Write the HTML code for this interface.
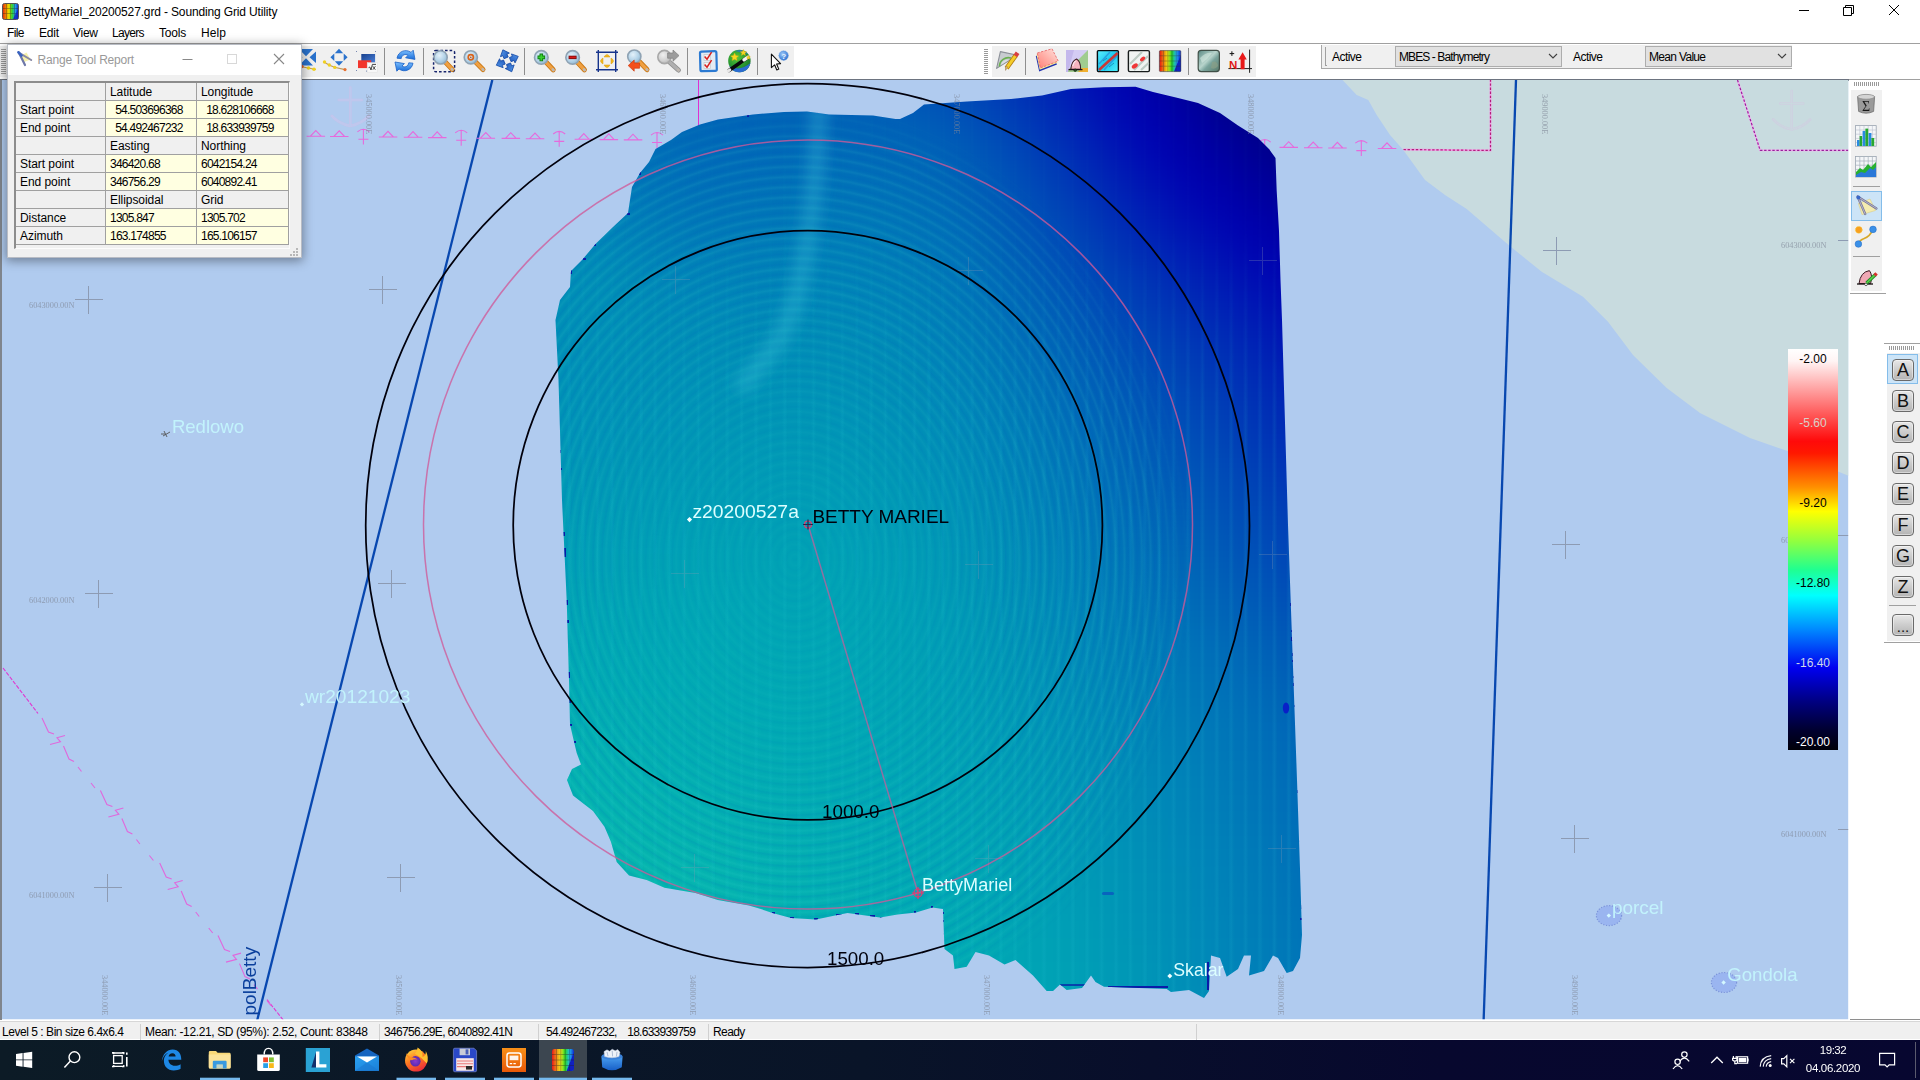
<!DOCTYPE html>
<html><head><meta charset="utf-8"><title>Sounding Grid Utility</title>
<style>
*{box-sizing:border-box;margin:0;padding:0}
html,body{width:1920px;height:1080px;overflow:hidden;background:#fff;font-family:"Liberation Sans",sans-serif;font-size:12px;color:#000}
.abs{position:absolute}
#titlebar{position:absolute;left:0;top:0;width:1920px;height:23px;background:#fff}
#title{position:absolute;left:23.5px;top:5px;font-size:12px;white-space:nowrap;letter-spacing:-0.145px}
#menubar{position:absolute;left:0;top:23px;width:1920px;height:20px;background:#fff}
#menubar span{position:absolute;top:3px;font-size:12px}
#toolbar{position:absolute;left:0;top:43px;width:1920px;height:37px;background:#fff;border-top:1px solid #a0a0a0}
.tbpanel{position:absolute;background:#f0f0f0}
.sep{position:absolute;width:1px;background:#a0a0a0}
#rightpane{position:absolute;left:1849px;top:80px;width:71px;height:941px;background:#fff}
#statusbar{position:absolute;left:0;top:1021px;width:1920px;height:19px;background:#f0f0f0;border-top:1px solid #d7d7d7;border-bottom:1px solid #fff;font-size:12px}
#statusbar span{position:absolute;top:3px;white-space:nowrap}
#statusbar i{position:absolute;top:2px;width:1px;height:16px;background:#d0d0d0}
#taskbar{position:absolute;left:0;top:1040px;width:1920px;height:40px;background:linear-gradient(90deg,#0c1b26 0%,#091428 45%,#07082e 75%,#070730 100%)}
#rtwin{position:absolute;left:7px;top:44px;width:295px;height:214px;background:#f0f0f0;border:1px solid #b8bcc4;box-shadow:0 2px 10px 1px rgba(0,0,0,.38)}
#rttitle{position:absolute;left:0;top:0;width:293px;height:30px;background:#fff}
#rttitle span{position:absolute;left:29.5px;top:8px;color:#999;font-size:12px;letter-spacing:-.2px}
#rtgrid{position:absolute;left:6px;top:36px;width:276px;height:168px;background:#f0f0f0;border-left:2px solid #8c8c8c;border-top:2px solid #8c8c8c;border-right:1px solid #fafafa;border-bottom:1px solid #fcfcfc}
.c{position:absolute;height:18px;border-right:1px solid #a0a0a0;border-bottom:1px solid #a0a0a0;font-size:12px;line-height:18px;padding-left:4px;white-space:nowrap;letter-spacing:-.15px}
.h{background:#f0f0f0;letter-spacing:-.06px}.v{background:#ffffe1;letter-spacing:-.77px}
.lb{position:absolute;left:1888px;width:30px;height:30px}
.key{position:absolute;left:1892px;width:22px;height:22px;border-radius:4px;border:1px solid #6a6a6a;background:linear-gradient(180deg,#e8e8e8 0%,#cfcfcf 45%,#b4b4b4 100%);box-shadow:inset 0 0 0 1px rgba(255,255,255,.45);font-size:18px;line-height:20px;text-align:center;color:#111}

</style></head>
<body>
<div id="titlebar">
<svg class="abs" style="left:2px;top:3px" width="17" height="17" viewBox="0 0 17 17">
<defs><linearGradient id="ticon" x1="0" x2="1"><stop offset="0" stop-color="#e02010"/><stop offset=".2" stop-color="#f08000"/><stop offset=".4" stop-color="#e8e000"/><stop offset=".6" stop-color="#30d030"/><stop offset=".8" stop-color="#20a0f0"/><stop offset="1" stop-color="#1020c0"/></linearGradient></defs>
<rect x=".5" y=".5" width="16" height="16" rx="2" fill="url(#ticon)" stroke="#555"/>
<path d="M4.5,1 v15 M8.5,1 v15 M12.5,1 v15 M1,5.5 h15 M1,10.5 h15" stroke="#222" stroke-width=".6" opacity=".55"/>
<path d="M11,16 L16,6 V16Z" fill="#1020c0" opacity=".8"/>
</svg>
<div id="title">BettyMariel_20200527.grd - Sounding Grid Utility</div>
<svg class="abs" style="left:1790px;top:0" width="130" height="23" viewBox="0 0 130 23" fill="none" stroke="#000" stroke-width="1">
<path d="M9,10.5 h10"/>
<path d="M53.5,7.5 h8 v8 h-8z M55.5,7.5 v-2 h8 v8 h-2"/>
<path d="M99,5 l10,10 M109,5 l-10,10"/>
</svg>
</div>
<div id="menubar">
<span style="left:7px;letter-spacing:-.6px">File</span><span style="left:39px;letter-spacing:-.23px">Edit</span><span style="left:73px;letter-spacing:-.27px">View</span><span style="left:112px;letter-spacing:-.7px">Layers</span><span style="left:159px;letter-spacing:-.18px">Tools</span><span style="left:201px;letter-spacing:.1px">Help</span>
</div>
<div id="toolbar">
<!-- left toolbar panel -->
<div class="tbpanel" style="left:0;top:2px;width:794px;height:31px"></div>
<div class="abs" style="left:1px;top:5px;width:5px;height:26px;background:repeating-linear-gradient(180deg,#9a9a9a 0 1px,#f0f0f0 1px 2px)"></div>
<!--ICONS1-->
<!-- second toolbar -->
<div class="tbpanel" style="left:992px;top:2px;width:264px;height:31px"></div>
<div class="abs" style="left:984px;top:5px;width:4px;height:26px;background:repeating-linear-gradient(180deg,#9a9a9a 0 1px,#fff 1px 2px)"></div>
<!--ICONS2-->
<!-- combos -->
<div class="tbpanel" style="left:1321px;top:1px;width:471px;height:24px;border-bottom:1px solid #a8a8a8;border-left:1px solid #a8a8a8"></div>
<div class="abs" style="left:1325px;top:3px;width:2px;height:19px;border-left:1px solid #a0a0a0;border-bottom:1px solid #a0a0a0"></div>
<span class="abs" style="left:1332px;top:6px;letter-spacing:-.54px">Active</span>
<div class="abs" style="left:1395px;top:2px;width:167px;height:21px;background:#e1e1e1;border:1px solid #adadad"></div>
<span class="abs" style="left:1399px;top:6px;letter-spacing:-.9px">MBES - Bathymetry</span>
<svg class="abs" style="left:1548px;top:9px" width="10" height="7"><path d="M1,1 l4,4 l4,-4" fill="none" stroke="#404040" stroke-width="1.1"/></svg>
<span class="abs" style="left:1573px;top:6px;letter-spacing:-.54px">Active</span>
<div class="abs" style="left:1645px;top:2px;width:147px;height:21px;background:#e1e1e1;border:1px solid #adadad"></div>
<span class="abs" style="left:1649px;top:6px;letter-spacing:-.68px">Mean Value</span>
<svg class="abs" style="left:1777px;top:9px" width="10" height="7"><path d="M1,1 l4,4 l4,-4" fill="none" stroke="#404040" stroke-width="1.1"/></svg>
</div>
<div class="abs" style="left:0;top:79px;width:1849px;height:2px;background:#6d7480"></div>
<div class="abs" style="left:1849px;top:79px;width:71px;height:1px;background:#a0a0a0"></div>

<svg class="abs" style="left:0;top:0" width="1920" height="300" viewBox="0 0 1920 300"><defs>
<radialGradient id="lensb" cx=".4" cy=".35" r=".7"><stop offset="0" stop-color="#e4f1fa"/><stop offset=".6" stop-color="#b4d3e8"/><stop offset="1" stop-color="#8db4d0"/></radialGradient>
<radialGradient id="lensg" cx=".4" cy=".35" r=".7"><stop offset="0" stop-color="#efefef"/><stop offset=".6" stop-color="#d2d2d2"/><stop offset="1" stop-color="#b4b4b4"/></radialGradient>
<linearGradient id="blu" x1="0" y1="0" x2="0" y2="1"><stop offset="0" stop-color="#7cc0ff"/><stop offset="1" stop-color="#1a6cd8"/></linearGradient>
<linearGradient id="blu2" x1="0" y1="0" x2="1" y2="1"><stop offset="0" stop-color="#5aa0f0"/><stop offset="1" stop-color="#1c54b8"/></linearGradient>
<linearGradient id="navy" x1="0" y1="0" x2="1" y2="1"><stop offset="0" stop-color="#17408c"/><stop offset="1" stop-color="#4a80d8"/></linearGradient>
<radialGradient id="globe" cx=".4" cy=".35" r=".75"><stop offset="0" stop-color="#58c838"/><stop offset=".55" stop-color="#2a9a30"/><stop offset="1" stop-color="#186a28"/></radialGradient>
<radialGradient id="qb" cx=".4" cy=".35" r=".7"><stop offset="0" stop-color="#9cc8f8"/><stop offset="1" stop-color="#2a70d0"/></radialGradient>
<linearGradient id="pinkg" x1="0" y1="1" x2="1" y2="0"><stop offset="0" stop-color="#ff8078"/><stop offset=".5" stop-color="#ffb0a8"/><stop offset="1" stop-color="#ffe4e0"/></linearGradient>
<linearGradient id="cyg" x1="0" y1="0" x2="1" y2="1"><stop offset="0" stop-color="#60f0ff"/><stop offset=".5" stop-color="#18c8f0"/><stop offset="1" stop-color="#50f0f8"/></linearGradient>
<linearGradient id="rainb" x1="0" x2="1"><stop offset="0" stop-color="#e81010"/><stop offset=".2" stop-color="#f08010"/><stop offset=".38" stop-color="#e8e810"/><stop offset=".58" stop-color="#20d828"/><stop offset=".78" stop-color="#20b0f0"/><stop offset="1" stop-color="#1028d0"/></linearGradient>
<linearGradient id="sat" x1="0" y1="0" x2="1" y2="1"><stop offset="0" stop-color="#5a8a84"/><stop offset=".45" stop-color="#b8d4cc"/><stop offset=".6" stop-color="#7aa49c"/><stop offset="1" stop-color="#587868"/></linearGradient>
<linearGradient id="keyg" x1="0" y1="0" x2="0" y2="1"><stop offset="0" stop-color="#d8d8d8"/><stop offset="1" stop-color="#8c8c8c"/></linearGradient>
</defs><g fill="#2a72cc"><path d="M299,49 h14 l-7,7.2z M299,65.5 h14 l-7,-7.2z M316,51.5 v11.5 l-6.5,-5.8z M296,51.5 v11.5 l6.5,-5.8z"/></g><path d="M298,66 L308,68 L316,69.5" stroke="#c8a040" stroke-width="1.2" fill="none"/><circle cx="302" cy="66.5" r="1.7" fill="#e06030"/><circle cx="308.5" cy="68" r="1.8" fill="#f0d020"/><circle cx="314" cy="69.3" r="1.8" fill="#f0d020"/><g fill="#2a72cc"><path d="M334.8,53.3 h8.4 l-4.2,-4.5z M334.8,61.2 h8.4 l-4.2,4.5z M334.3,53.6 v7.4 l-3.9,-3.7z M343.7,53.6 v7.4 l3.9,-3.7z"/></g><path d="M324,62 L329,65 L334.5,67.3 L345,69.6" stroke="#c09a58" stroke-width="1.1" fill="none"/><circle cx="324.5" cy="62" r="1.7" fill="#f0d020"/><circle cx="329.3" cy="65" r="1.7" fill="#f0d020"/><circle cx="334.8" cy="67.4" r="1.7" fill="#f0d020"/><circle cx="345" cy="69.6" r="1.6" fill="#e87030"/><rect x="361.3" y="54" width="13.8" height="9" fill="url(#navy)"/><rect x="358" y="60.3" width="13.2" height="7.8" fill="#f2352c"/><rect x="367.2" y="62.6" width="10" height="9.6" fill="#f8f8f8" stroke="#e0e0e0" stroke-width=".5"/><path d="M368.6,67.6 l1.2,-.6 l1.2,3 l1.4,-5.6 h3.6" stroke="#303030" stroke-width=".9" fill="none"/><path d="M372.8,66.2 l2.6,3.6 M375.4,66.2 l-2.6,3.6" stroke="#303030" stroke-width=".8"/><g fill="#7888b0"><rect x="356" y="51" width="1" height="1"/><rect x="375" y="51" width="1" height="1"/><rect x="356" y="70" width="1" height="1"/><rect x="366" y="70.6" width="1" height="1"/></g><g fill="url(#blu)" stroke="#1a62c8" stroke-width=".8" stroke-linejoin="round"><path d="M397,58.2 C398,51.6 405.5,48.4 411,52.4 L413.2,50.2 L415,59.4 L405.6,57.8 L408,55.4 C405.4,53.4 401.8,54.8 401.2,58.6Z"/><path d="M413,63.2 C412,69.8 404.5,73 399,69 L396.8,71.2 L395,62 L404.4,63.6 L402,66 C404.6,68 408.2,66.6 408.8,62.8Z"/></g><rect x="433.6" y="50.4" width="21" height="21.4" rx="2.2" fill="none" stroke="#16246c" stroke-width="1.5" stroke-dasharray="2.6 2"/><line x1="445.35200000000003" y1="62.152" x2="452.2" y2="69.4" stroke="#c87818" stroke-width="5" stroke-linecap="round"/><line x1="445.35200000000003" y1="62.152" x2="452.2" y2="69.4" stroke="#f0a040" stroke-width="3.2" stroke-linecap="round"/><line x1="451.9" y1="69.10000000000001" x2="452.5" y2="69.7" stroke="#c0b8b0" stroke-width="2.6" stroke-linecap="round"/><circle cx="440.6" cy="57.4" r="6.6" fill="url(#lensb)" stroke="#8fa3b4" stroke-width="1.6"/><line x1="475.552" y1="62.052" x2="483" y2="69.5" stroke="#c87818" stroke-width="5" stroke-linecap="round"/><line x1="475.552" y1="62.052" x2="483" y2="69.5" stroke="#f0a040" stroke-width="3.2" stroke-linecap="round"/><line x1="482.7" y1="69.2" x2="483.3" y2="69.8" stroke="#c0b8b0" stroke-width="2.6" stroke-linecap="round"/><circle cx="470.8" cy="57.3" r="6.6" fill="url(#lensb)" stroke="#8fa3b4" stroke-width="1.6"/><circle cx="470.8" cy="57.3" r="2.6" fill="none" stroke="#d8641c" stroke-width="1.7"/><circle cx="470.8" cy="57.3" r=".8" fill="#b04810"/><g transform="translate(507.3,60.8) rotate(-22)" fill="url(#blu2)" stroke="#1a4ea8" stroke-width=".8" stroke-linejoin="round"><path d="M-2.2,-3.2 V-6.4 H-4.8 L0,-11.8 L4.8,-6.4 H2.2 V-3.200Z" transform="rotate(0)"/><path d="M-2.2,-3.2 V-6.4 H-4.8 L0,-11.8 L4.8,-6.4 H2.2 V-3.200Z" transform="rotate(90)"/><path d="M-2.2,-3.2 V-6.4 H-4.8 L0,-11.8 L4.8,-6.4 H2.2 V-3.200Z" transform="rotate(180)"/><path d="M-2.2,-3.2 V-6.4 H-4.8 L0,-11.8 L4.8,-6.4 H2.2 V-3.200Z" transform="rotate(270)"/></g><line x1="546.1959999999999" y1="62.296" x2="553.2" y2="69.8" stroke="#c87818" stroke-width="5" stroke-linecap="round"/><line x1="546.1959999999999" y1="62.296" x2="553.2" y2="69.8" stroke="#f0a040" stroke-width="3.2" stroke-linecap="round"/><line x1="552.9000000000001" y1="69.5" x2="553.5" y2="70.1" stroke="#c0b8b0" stroke-width="2.6" stroke-linecap="round"/><circle cx="541.3" cy="57.4" r="6.8" fill="url(#lensb)" stroke="#8fa3b4" stroke-width="1.6"/><path d="M541.3,53.6 v7.6 M537.5,57.4 h7.6" stroke="#0c7c10" stroke-width="3.6"/><path d="M541.3,54.4 v6 M538.3,57.4 h6" stroke="#38d030" stroke-width="1.8"/><line x1="577.496" y1="62.296" x2="584.4" y2="69.8" stroke="#c87818" stroke-width="5" stroke-linecap="round"/><line x1="577.496" y1="62.296" x2="584.4" y2="69.8" stroke="#f0a040" stroke-width="3.2" stroke-linecap="round"/><line x1="584.1" y1="69.5" x2="584.6999999999999" y2="70.1" stroke="#c0b8b0" stroke-width="2.6" stroke-linecap="round"/><circle cx="572.6" cy="57.4" r="6.8" fill="url(#lensb)" stroke="#8fa3b4" stroke-width="1.6"/><path d="M568.6,57.4 h8" stroke="#7c0c0c" stroke-width="3.4"/><path d="M569.4,57.4 h6.4" stroke="#d81818" stroke-width="1.7"/><path d="M598.3,50 v22 M615.7,50 v22 M596,52.3 h22 M596,69.7 h22" stroke="#17348c" stroke-width="1.4" fill="none"/><g fill="#f2b81c" stroke="#d89a10" stroke-width=".5"><path d="M604,57 h6 q-3,-5 -6,0z M604,65 h6 q-3,5 -6,0z M603,58 v6 q-5,-3 0,-6z M611,58 v6 q5,-3 0,-6z"/></g><line x1="639.0519999999999" y1="61.352000000000004" x2="647" y2="69.6" stroke="#c87818" stroke-width="5" stroke-linecap="round"/><line x1="639.0519999999999" y1="61.352000000000004" x2="647" y2="69.6" stroke="#f0a040" stroke-width="3.2" stroke-linecap="round"/><line x1="646.7" y1="69.3" x2="647.3" y2="69.89999999999999" stroke="#c0b8b0" stroke-width="2.6" stroke-linecap="round"/><circle cx="634.3" cy="56.6" r="6.6" fill="url(#lensb)" stroke="#8fa3b4" stroke-width="1.6"/><path d="M628.2,65.6 L634.2,60 V63 H639.6 V68.2 H634.2 V71.2Z" fill="#f4501c" stroke="#d03c10" stroke-width=".7" stroke-linejoin="round"/><line x1="669.1519999999999" y1="61.752" x2="678.4" y2="70" stroke="#8e8e8e" stroke-width="5" stroke-linecap="round"/><line x1="669.1519999999999" y1="61.752" x2="678.4" y2="70" stroke="#b0b0b0" stroke-width="3.2" stroke-linecap="round"/><line x1="678.1" y1="69.7" x2="678.6999999999999" y2="70.3" stroke="#c0b8b0" stroke-width="2.6" stroke-linecap="round"/><circle cx="664.4" cy="57" r="6.6" fill="url(#lensg)" stroke="#a8a8a8" stroke-width="1.6"/><path d="M679,55.6 L673,50 V53 H667.6 V58.2 H673 V61.2Z" fill="#9c9c9c" stroke="#808080" stroke-width=".7" stroke-linejoin="round"/><rect x="700.2" y="51.4" width="16.4" height="19.6" rx="1.6" fill="#e4ebf3" stroke="#2c7ad2" stroke-width="2.2" transform="rotate(-1.5 708 61)"/><rect x="704" y="54.6" width="6.6" height="6" fill="#f4f4f4" stroke="#c4c8cc" stroke-width=".7"/><rect x="704" y="62.6" width="6.6" height="6" fill="#f4f4f4" stroke="#c4c8cc" stroke-width=".7"/><path d="M704.6,56.6 l2.4,2.6 l4.6,-7" stroke="#d82020" stroke-width="1.5" fill="none"/><path d="M704.6,64.6 l2.4,2.6 l4.6,-7" stroke="#d82020" stroke-width="1.5" fill="none"/><circle cx="739.4" cy="61" r="11.2" fill="url(#globe)"/><path d="M729,66 Q740,72 750.4,63 A11.2,11.2 0 0 1 730.6,68Z" fill="#2a6cd0"/><path d="M735,51 q8,-3 13,3 q-6,-1 -13,-3z" fill="#2a78c8" opacity=".8"/><path d="M729,70.4 L747.6,57.4" stroke="#0a0a0a" stroke-width="3.6" stroke-linecap="round"/><path d="M744,59.9 L748,57.1" stroke="#f4f4f4" stroke-width="3.4" stroke-linecap="round"/><path d="M728.2,71 l1.6,-1.1" stroke="#e8e8e8" stroke-width="3" stroke-linecap="round"/><g fill="#f8d820" stroke="#d8a810" stroke-width=".4"><path d="M734.6,53 l1.2,2.6 l2.8,.3 l-2.1,1.9 l.6,2.8 l-2.5,-1.4 l-2.5,1.4 l.6,-2.8 l-2.1,-1.9 l2.8,-.3z"/><path d="M743.4,49.6 l.9,2 l2.2,.2 l-1.6,1.5 l.5,2.1 l-2,-1.1 l-2,1.1 l.5,-2.1 l-1.6,-1.5 l2.2,-.2z"/><path d="M748.4,55.4 l.6,1.3 l1.4,.1 l-1,1 l.3,1.4 l-1.3,-.7 l-1.3,.7 l.3,-1.4 l-1,-1 l1.4,-.1z"/></g><circle cx="783.6" cy="55.6" r="4.8" fill="url(#qb)" stroke="#6aa0e0" stroke-width=".6" stroke-dasharray="1 .8"/><text x="783.6" y="58.6" font-size="8" font-weight="bold" text-anchor="middle" fill="#e8f2ff" font-family="Liberation Sans,sans-serif">?</text><path d="M771.4,54.2 V67.6 L774.6,64.8 L776.8,70 L778.8,69.1 L776.6,64 L780.6,63.6Z" fill="#fff" stroke="#101010" stroke-width="1.1" stroke-linejoin="round"/><path d="M384.5,48 v27" stroke="#8e8e8e" stroke-width="1"/><path d="M423.5,48 v27" stroke="#8e8e8e" stroke-width="1"/><path d="M524.5,48 v27" stroke="#8e8e8e" stroke-width="1"/><path d="M687.5,48 v27" stroke="#8e8e8e" stroke-width="1"/><path d="M757.5,48 v27" stroke="#8e8e8e" stroke-width="1"/><path d="M996.6,68.4 L1000.4,51.6 L1017.6,55.2 Z" fill="#c8ccd0" stroke="#8c9098" stroke-width="1.1" stroke-linejoin="round"/><path d="M999.4,66.4 A9,9 0 0 1 1011,58" fill="none" stroke="#6ab050" stroke-width="1.6"/><path d="M1001,65 A6.4,6.4 0 0 1 1009,60" fill="#e8ecec" stroke="none" opacity=".6"/><path d="M1015.8,55.4 L1006.6,68.2" stroke="#b07810" stroke-width="4.6" stroke-linecap="butt"/><path d="M1015.8,55.4 L1006.6,68.2" stroke="#f4cc28" stroke-width="3" stroke-linecap="butt"/><path d="M1017.6,52.8 L1015.4,56" stroke="#d84040" stroke-width="4.4"/><path d="M1007.6,66.8 l-2,3.6 l-.2,-3.8z" fill="#e8c898" stroke="#8a6a40" stroke-width=".5"/><path d="M1025.5,48 v27" stroke="#8e8e8e"/><path d="M1035.800,56 L1050.600,51.800 L1057,64.400 L1039.200,71.400Z" fill="#2030b0"/><path d="M1036.500,54.600 L1051.300,50.400 L1057.600,62.800 L1039.700,69.800Z" fill="#f8ec98"/><path d="M1037.300,53 L1052,48.800 L1058.200,61.100 L1040.300,68Z" fill="url(#pinkg)" stroke="#e86c6c" stroke-width=".9" stroke-dasharray="2.400 1.400" stroke-linejoin="round"/><rect x="1066" y="50" width="22" height="22" fill="#d4ccf4"/><path d="M1088,50 V72 H1066 Z" fill="#a0cc90"/><path d="M1066,50 h8 L1068,72 h-2z" fill="#c4b8ec"/><path d="M1082,68 h6 v4 h-10z" fill="#f0b030"/><path d="M1070.800,69.200 Q1071.600,61 1076.600,59 Q1080.800,61.400 1080.600,69.200 Z" fill="#f8b4c0" stroke="#402028" stroke-width="1.100"/><path d="M1072.800,66 q.8,-4 3,-5" stroke="#fff" stroke-width="1.200" opacity=".7" fill="none"/><path d="M1068.500,69.600 h14" stroke="#201018" stroke-width="1.300"/><circle cx="1075.200" cy="70.200" r="1.300" fill="#206020" stroke="#201018" stroke-width=".6"/><rect x="1097.4" y="50.6" width="21" height="21" rx="1" fill="url(#cyg)" stroke="#080c10" stroke-width="1.4"/><g stroke="#2890d8" stroke-width="1.6" opacity=".75"><path d="M1099,64 L1110,52 M1104,70 L1117,56"/></g><path d="M1099,70 L1117.6,53" stroke="#c83838" stroke-width="2.6"/><path d="M1103,61 l4,-3 M1109,67 l5,-4" stroke="#1078a8" stroke-width="1" opacity=".7"/><rect x="1128.4" y="50.6" width="21" height="21" rx="1.4" fill="#f0f4f2" stroke="#181c1c" stroke-width="1.4"/><g stroke="#b8c8c0" stroke-width="2.2" opacity=".9"><path d="M1130,64 L1142,52 M1134,70 L1148,56 M1141,70 L1148.6,63"/></g><ellipse cx="1142.6" cy="59" rx="3" ry="1.8" fill="#f03838" transform="rotate(-35 1142.6 59)"/><ellipse cx="1134.8" cy="66" rx="3.4" ry="2" fill="#f03838" transform="rotate(-35 1134.8 66)"/><rect x="1159.4" y="50.6" width="21.4" height="21" rx="1" fill="url(#rainb)"/><path d="M1174,71.6 L1180.8,55 V71.6Z" fill="#1020c0"/><path d="M1163.6,50.6 v21 M1167.8,50.6 v21 M1172,50.6 v21 M1176.2,50.6 v21 M1159.4,55.8 h21.4 M1159.4,61 h21.4 M1159.4,66.2 h21.4" stroke="#303030" stroke-width=".7" opacity=".5"/><rect x="1159.4" y="50.6" width="21.4" height="21" rx="1" fill="none" stroke="#303840" stroke-width=".8" opacity=".7"/><path d="M1188.5,48 v27" stroke="#8e8e8e"/><rect x="1198.2" y="50.4" width="21.2" height="21.2" rx="3" fill="url(#sat)" stroke="#405048" stroke-width="1.2"/><path d="M1200,58 q6,-6 12,-5 q-4,6 -10,10z" fill="#d8ece4" opacity=".55"/><path d="M1212,62 q5,-2 6,4 q-3,4 -7,2z" fill="#8aa088" opacity=".7"/><path d="M1249.6,49.6 V72.8 M1228.4,68.6 H1252" stroke="#202020" stroke-width="1"/><path d="M1229.6,53.6 h4.6 M1231.9,51.3 v4.6" stroke="#101010" stroke-width="1"/><path d="M1242.6,52.2 L1246.8,59.6 H1244.6 V69.2 H1240.6 V59.6 H1238.4Z" fill="#e81818"/><text x="1229" y="69.4" font-size="11.5" font-weight="bold" fill="#e01818" font-family="Liberation Sans,sans-serif">N</text></svg>
<svg id="map" width="1920" height="1080" viewBox="0 0 1920 1080" style="position:absolute;left:0;top:0">
<defs>
<clipPath id="mapclip"><rect x="0" y="80" width="1848.2" height="939.2"/></clipPath>
<clipPath id="blobclip"><path d="M569,680 L566.7,600 L562,500 L558.5,380 L555.5,320 L560,300 L570,287 L571,271 L582,260 L595.5,244 L613,227 L628,213 L630,200 L632,187 L640,173 L649,162 L655.5,149 L671,140 L682,132 L700,124.5 L718,119.5 L753,114.5 L784,112 L807,111.5 L829,114.5 L873,115.5 L895.5,119 L900,119 L913,113 L924,104.5 L967,101.5 L1011,99 L1042,95.5 L1071,89 L1104,87.3 L1135.5,86.7 L1153,92 L1178,98 L1198,103 L1220,113 L1238,125.5 L1258,138 L1269,149 L1275.5,158 L1276.7,191 L1279,231 L1280.5,280 L1282,320 L1288,525 L1297,780 L1300,869 L1302,935 L1300,958 L1293,971 L1286.7,973 L1278,958 L1273,955.5 L1264,971 L1249,975.5 L1251,955.5 L1244,955.5 L1238,969 L1226.7,976.7 L1220,958 L1211,955.5 L1209,991 L1204,998 L1189,990 L1171,992 L1166.7,989 L1104,986.7 L1095.5,982 L1091,975.5 L1082,988 L1066.7,990 L1060,984.5 L1053,991 L1046.7,991 L1033,975.5 L1015.5,960 L1004.5,964.5 L989,955.5 L975.5,952 L966.7,966.7 L954.5,969 L953,955.5 L944.5,949 L943,909 L932.5,907.5 L916,912.5 L897.5,914.4 L880,917.5 L847.5,913 L835,915.6 L816,919.4 L791,918 L772.5,913 L760,908.75 L749,905.5 L717.8,900 L695.5,893 L664.5,887.8 L646.7,880 L629,875.5 L616.7,862 L611,842 L604.5,826.7 L593,811 L573,795.5 L567,780 L572,769 L581,764.5 L576.7,753 L570,724.4Z"/></clipPath>
<filter id="blur" x="0" y="0" width="100%" height="100%" filterUnits="userSpaceOnUse" color-interpolation-filters="sRGB"><feGaussianBlur stdDeviation="14"/></filter>
<linearGradient id="legend" x1="0" y1="0" x2="0" y2="1">
<stop offset="0" stop-color="#ffffff"/>
<stop offset="0.03" stop-color="#fff4f4"/>
<stop offset="0.23" stop-color="#ff0a0a"/>
<stop offset="0.26" stop-color="#ff1800"/>
<stop offset="0.345" stop-color="#ff9000"/>
<stop offset="0.405" stop-color="#ffff00"/>
<stop offset="0.48" stop-color="#90ff40"/>
<stop offset="0.55" stop-color="#20ff90"/>
<stop offset="0.615" stop-color="#00ffff"/>
<stop offset="0.70" stop-color="#0088ff"/>
<stop offset="0.795" stop-color="#0000f0"/>
<stop offset="0.88" stop-color="#000080"/>
<stop offset="0.95" stop-color="#000030"/>
<stop offset="1" stop-color="#000008"/>
</linearGradient>
<linearGradient id="vstripe" gradientUnits="userSpaceOnUse" x1="0" y1="0" x2="14.4" y2="0" spreadMethod="repeat">
<stop offset="0" stop-color="#30d8e0" stop-opacity="0"/><stop offset=".3" stop-color="#30d8e0" stop-opacity="0"/><stop offset=".5" stop-color="#30d8e0" stop-opacity=".10"/><stop offset=".7" stop-color="#30d8e0" stop-opacity="0"/><stop offset="1" stop-color="#30d8e0" stop-opacity="0"/>
</linearGradient>
<radialGradient id="rings" gradientUnits="userSpaceOnUse" cx="795" cy="560" r="10.2" spreadMethod="repeat" gradientTransform="translate(795 560) scale(.86 1) translate(-795 -560)">
<stop offset="0" stop-color="#0048c0" stop-opacity=".09"/><stop offset=".25" stop-color="#0048c0" stop-opacity="0"/><stop offset=".3" stop-color="#50f0d0" stop-opacity="0"/><stop offset=".55" stop-color="#50f0d0" stop-opacity=".09"/><stop offset=".8" stop-color="#50f0d0" stop-opacity="0"/><stop offset=".85" stop-color="#0048c0" stop-opacity="0"/><stop offset="1" stop-color="#0048c0" stop-opacity=".09"/>
</radialGradient>
<radialGradient id="ringmask" gradientUnits="userSpaceOnUse" cx="790" cy="570" r="470" gradientTransform="translate(790 570) scale(.86 1) translate(-790 -570)">
<stop offset="0" stop-color="#fff" stop-opacity=".25"/><stop offset=".35" stop-color="#fff" stop-opacity=".5"/><stop offset=".6" stop-color="#fff" stop-opacity="1"/><stop offset=".9" stop-color="#fff" stop-opacity="1"/><stop offset="1" stop-color="#fff" stop-opacity="0"/>
</radialGradient>
<mask id="rmask" maskUnits="userSpaceOnUse" x="500" y="60" width="860" height="980"><rect x="500" y="60" width="860" height="980" fill="url(#ringmask)"/></mask>
<filter id="blur6" x="600" y="60" width="500" height="500" filterUnits="userSpaceOnUse"><feGaussianBlur stdDeviation="7"/></filter>
<linearGradient id="vsg" gradientUnits="userSpaceOnUse" x1="0" y1="230" x2="0" y2="420"><stop offset="0" stop-color="#fff" stop-opacity=".15"/><stop offset="1" stop-color="#fff" stop-opacity="1"/></linearGradient>
<mask id="vsmask" maskUnits="userSpaceOnUse" x="500" y="60" width="860" height="980"><rect x="500" y="60" width="860" height="980" fill="url(#vsg)"/></mask>

</defs>
<g clip-path="url(#mapclip)">
<rect x="0" y="80" width="1849" height="941" fill="#b0cbef"/>
<path d="M1342.500,80 L1356.700,95 L1368.300,100 L1376.700,115 L1390,135 L1403.300,150 L1425,180 L1445,195 L1466.7,209 L1508,244.6 L1541.7,271.7 L1583,296.7 L1608,321.7 L1633,355 L1666.7,388 L1700,413 L1750,438 L1787.5,451 L1849,476 L1849,80Z" fill="#c8dbdf"/>
<!-- blue lines -->
<g stroke="#0848b0" stroke-width="2.300" fill="none">
<line x1="492.3" y1="80" x2="257" y2="1021"/>
<line x1="1516" y1="80" x2="1483.6" y2="1021"/>
</g>
<!-- magenta chart features -->
<g stroke="#e060d8" stroke-width="1" fill="none" shape-rendering="crispEdges">
<line x1="698.5" y1="80" x2="698.5" y2="126" stroke="#e030d0" stroke-width="1.4"/>
<path d="M1403.500,149.500 L1490.500,150.500 V80" stroke="#f0a0e4" stroke-width="1.800" shape-rendering="auto"/><path d="M1403.500,149.500 L1490.500,150.500 V80" stroke-dasharray="2.400 1.700" stroke="#b41c7c" stroke-width="1.200" shape-rendering="auto"/>
<path d="M1737.500,80 L1760.200,150.400 H1849" stroke="#f2b0f0" stroke-width="1.800" shape-rendering="auto"/><path d="M1737.500,80 L1760.200,150.400 H1849" stroke-dasharray="2.400 1.700" stroke="#98209a" stroke-width="1.200" shape-rendering="auto"/>
</g>
<g stroke="#e070dc" stroke-width="1" fill="none">
<path d="M363.4,129.2 v15.4 M358.4,139.2 h10 M357.4,131.8 q6,-5.200 12,0 M461.2,130.3 v15.4 M456.2,140.3 h10 M455.2,132.9 q6,-5.200 12,0 M559.2,131.4 v15.4 M554.2,141.4 h10 M553.2,134.0 q6,-5.200 12,0 M657.0,132.5 v15.4 M652.0,142.5 h10 M651.0,135.1 q6,-5.200 12,0 M306.6,136.2 h18.5 M310.4,136.2 l5.4,-5.7 l5.4,5.700 M330.0,136.5 h18.5 M333.8,136.5 l5.4,-5.7 l5.4,5.700 M378.8,137.0 h18.5 M382.6,137.0 l5.4,-5.7 l5.4,5.700 M403.8,137.3 h18.5 M407.6,137.3 l5.4,-5.7 l5.4,5.700 M428.0,137.6 h18.5 M431.8,137.6 l5.4,-5.7 l5.4,5.700 M476.6,138.2 h18.5 M480.4,138.2 l5.4,-5.7 l5.4,5.700 M501.6,138.4 h18.5 M505.4,138.4 l5.4,-5.7 l5.4,5.700 M525.8,138.7 h18.5 M529.6,138.7 l5.4,-5.7 l5.4,5.700 M574.6,139.3 h18.5 M578.4,139.3 l5.4,-5.7 l5.4,5.700 M599.6,139.6 h18.5 M603.4,139.6 l5.4,-5.7 l5.4,5.700 M623.8,139.9 h18.5 M627.6,139.9 l5.4,-5.7 l5.4,5.700 M1264.7,139.5 v15.4 M1259.7,149.5 h10 M1258.7,142.1 q6,-5.200 12,0 M1361.3,140.6 v15.4 M1356.3,150.6 h10 M1355.3,143.2 q6,-5.200 12,0 M1279.5,147.4 h18.5 M1283.3,147.4 l5.4,-5.7 l5.4,5.700 M1304.0,147.7 h18.5 M1307.8,147.7 l5.4,-5.7 l5.4,5.700 M1328.2,148.0 h18.5 M1332.0,148.0 l5.4,-5.7 l5.4,5.700 M1377.8,148.5 h18.5 M1381.6,148.5 l5.4,-5.7 l5.4,5.700" stroke="#e66adc" stroke-width="1.1" fill="none"/>
<!-- cable zig-zag lower-left -->
<path d="M3,668 L38,713.500" stroke-dasharray="4 1.500" stroke="#e038d0" stroke-width="1.100"/>
<path d="M267,999.600 L284,1021" stroke-dasharray="4 1.500" stroke="#e038d0" stroke-width="1.100"/>
<path d="M42.0,718.0 L48.5,732.0 L54.0,734.0 M50.0,744.5 L60.5,741.8 L57.0,737.8 L65.0,735.5 M63.5,746.0 L69.0,759.0 L74.0,761.5 M78.0,767.0 L81.5,771.5 M91.0,783.0 L95.0,788.0 M100.4,790.5 L106.9,804.5 L112.4,806.5 M108.4,817.0 L118.9,814.3 L115.4,810.3 L123.4,808.0 M121.9,818.5 L127.4,831.5 L132.4,834.0 M136.4,839.5 L139.9,844.0 M149.4,855.5 L153.4,860.5 M159.7,863.0 L166.2,877.0 L171.7,879.0 M167.7,889.5 L178.2,886.8 L174.7,882.8 L182.7,880.5 M181.2,891.0 L186.7,904.0 L191.7,906.5 M195.7,912.0 L199.2,916.5 M208.7,928.0 L212.7,933.0 M218.0,935.6 L224.5,949.6 L230.0,951.6 M226.0,962.1 L236.5,959.4 L233.0,955.4 L241.0,953.1 M239.5,963.6 L245.0,976.6 L250.0,979.1 M254.0,984.6 L257.5,989.1 M267.0,1000.6 L271.0,1005.6" stroke="#e068dc" stroke-width="1.1" fill="none"/>
</g>
<!-- anchors -->
<g fill="none" stroke-linecap="round">
<path d="M350.3,87.5 V126.0 M338.8,100.0 H361.8 M331.8,115.9 Q338.3,123.5 350.3,126.0 Q362.3,123.5 368.8,115.9" stroke="#d9bdea" stroke-width="2.600" opacity=".5"/>
<path d="M350.3,87.5 V126.0 M338.8,100.0 H361.8 M331.8,115.9 Q338.3,123.5 350.3,126.0 Q362.3,123.5 368.8,115.9" stroke="#b8cdf0" stroke-width=".9" opacity=".8"/>
<path d="M1791.7,91 V129.5 M1780.2,103.5 H1803.2 M1773.2,119.4 Q1779.7,127 1791.7,129.5 Q1803.7,127 1810.2,119.4" stroke="#d6c6e2" stroke-width="2.600" opacity=".55"/>
<path d="M1791.7,91 V129.5 M1780.2,103.5 H1803.2 M1773.2,119.4 Q1779.7,127 1791.7,129.5 Q1803.7,127 1810.2,119.4" stroke="#c8dbdf" stroke-width=".9" opacity=".8"/>
</g>
<!-- small dotted ellipses -->
<g fill="#9ab5f0" stroke="#7c94da" stroke-width="1.2" stroke-dasharray="1.2 1.600">
<ellipse cx="1609" cy="915.600" rx="12.600" ry="10"/>
<ellipse cx="1724" cy="982.500" rx="12.600" ry="10"/>
</g>

<g clip-path="url(#blobclip)" shape-rendering="crispEdges">
<g filter="url(#blur)">
<rect x="520" y="50" width="25" height="25" fill="#006ab8"/>
<rect x="544" y="50" width="25" height="25" fill="#0068b7"/>
<rect x="568" y="50" width="25" height="25" fill="#0066b7"/>
<rect x="592" y="50" width="25" height="25" fill="#0064b7"/>
<rect x="616" y="50" width="25" height="25" fill="#0061b7"/>
<rect x="640" y="50" width="25" height="25" fill="#005fb7"/>
<rect x="664" y="50" width="25" height="25" fill="#005db7"/>
<rect x="688" y="50" width="25" height="25" fill="#005cb7"/>
<rect x="712" y="50" width="25" height="25" fill="#005ab7"/>
<rect x="736" y="50" width="25" height="25" fill="#0059b7"/>
<rect x="760" y="50" width="25" height="25" fill="#0058b7"/>
<rect x="784" y="50" width="25" height="25" fill="#0057b7"/>
<rect x="808" y="50" width="25" height="25" fill="#0055b7"/>
<rect x="832" y="50" width="25" height="25" fill="#0054b7"/>
<rect x="856" y="50" width="25" height="25" fill="#0051b7"/>
<rect x="880" y="50" width="25" height="25" fill="#004eb7"/>
<rect x="904" y="50" width="25" height="25" fill="#004ab7"/>
<rect x="928" y="50" width="25" height="25" fill="#0044b6"/>
<rect x="952" y="50" width="25" height="25" fill="#003eb6"/>
<rect x="976" y="50" width="25" height="25" fill="#0036b6"/>
<rect x="1000" y="50" width="25" height="25" fill="#002cb5"/>
<rect x="1024" y="50" width="25" height="25" fill="#0022b5"/>
<rect x="1048" y="50" width="25" height="25" fill="#0017b4"/>
<rect x="1072" y="50" width="25" height="25" fill="#000db3"/>
<rect x="1096" y="50" width="25" height="25" fill="#0003b2"/>
<rect x="1120" y="50" width="25" height="25" fill="#0001ab"/>
<rect x="1144" y="50" width="25" height="25" fill="#0000a2"/>
<rect x="1168" y="50" width="25" height="25" fill="#000097"/>
<rect x="1192" y="50" width="25" height="25" fill="#00008d"/>
<rect x="1216" y="50" width="25" height="25" fill="#000085"/>
<rect x="1240" y="50" width="25" height="25" fill="#00007e"/>
<rect x="1264" y="50" width="25" height="25" fill="#000078"/>
<rect x="1288" y="50" width="25" height="25" fill="#000072"/>
<rect x="1312" y="50" width="25" height="25" fill="#00006c"/>
<rect x="1336" y="50" width="25" height="25" fill="#000069"/>
<rect x="520" y="74" width="25" height="25" fill="#006fb8"/>
<rect x="544" y="74" width="25" height="25" fill="#006cb8"/>
<rect x="568" y="74" width="25" height="25" fill="#006ab8"/>
<rect x="592" y="74" width="25" height="25" fill="#0068b7"/>
<rect x="616" y="74" width="25" height="25" fill="#0066b7"/>
<rect x="640" y="74" width="25" height="25" fill="#0063b7"/>
<rect x="664" y="74" width="25" height="25" fill="#0062b7"/>
<rect x="688" y="74" width="25" height="25" fill="#0060b7"/>
<rect x="712" y="74" width="25" height="25" fill="#005fb7"/>
<rect x="736" y="74" width="25" height="25" fill="#005eb7"/>
<rect x="760" y="74" width="25" height="25" fill="#005db7"/>
<rect x="784" y="74" width="25" height="25" fill="#005cb7"/>
<rect x="808" y="74" width="25" height="25" fill="#005bb7"/>
<rect x="832" y="74" width="25" height="25" fill="#005ab7"/>
<rect x="856" y="74" width="25" height="25" fill="#0058b7"/>
<rect x="880" y="74" width="25" height="25" fill="#0055b7"/>
<rect x="904" y="74" width="25" height="25" fill="#0052b7"/>
<rect x="928" y="74" width="25" height="25" fill="#004db7"/>
<rect x="952" y="74" width="25" height="25" fill="#0046b7"/>
<rect x="976" y="74" width="25" height="25" fill="#003eb6"/>
<rect x="1000" y="74" width="25" height="25" fill="#0034b6"/>
<rect x="1024" y="74" width="25" height="25" fill="#002ab5"/>
<rect x="1048" y="74" width="25" height="25" fill="#001fb5"/>
<rect x="1072" y="74" width="25" height="25" fill="#0013b4"/>
<rect x="1096" y="74" width="25" height="25" fill="#0009b3"/>
<rect x="1120" y="74" width="25" height="25" fill="#0002af"/>
<rect x="1144" y="74" width="25" height="25" fill="#0000a7"/>
<rect x="1168" y="74" width="25" height="25" fill="#00009d"/>
<rect x="1192" y="74" width="25" height="25" fill="#000093"/>
<rect x="1216" y="74" width="25" height="25" fill="#00008a"/>
<rect x="1240" y="74" width="25" height="25" fill="#000083"/>
<rect x="1264" y="74" width="25" height="25" fill="#00007d"/>
<rect x="1288" y="74" width="25" height="25" fill="#000077"/>
<rect x="1312" y="74" width="25" height="25" fill="#000071"/>
<rect x="1336" y="74" width="25" height="25" fill="#00006c"/>
<rect x="520" y="98" width="25" height="25" fill="#0073b8"/>
<rect x="544" y="98" width="25" height="25" fill="#0071b8"/>
<rect x="568" y="98" width="25" height="25" fill="#006fb8"/>
<rect x="592" y="98" width="25" height="25" fill="#006cb8"/>
<rect x="616" y="98" width="25" height="25" fill="#006ab7"/>
<rect x="640" y="98" width="25" height="25" fill="#0068b7"/>
<rect x="664" y="98" width="25" height="25" fill="#0066b7"/>
<rect x="688" y="98" width="25" height="25" fill="#0064b7"/>
<rect x="712" y="98" width="25" height="25" fill="#0063b7"/>
<rect x="736" y="98" width="73" height="25" fill="#0062b7"/>
<rect x="808" y="98" width="25" height="25" fill="#0061b7"/>
<rect x="832" y="98" width="25" height="25" fill="#0060b7"/>
<rect x="856" y="98" width="25" height="25" fill="#005fb7"/>
<rect x="880" y="98" width="25" height="25" fill="#005db7"/>
<rect x="904" y="98" width="25" height="25" fill="#0059b7"/>
<rect x="928" y="98" width="25" height="25" fill="#0055b7"/>
<rect x="952" y="98" width="25" height="25" fill="#004fb7"/>
<rect x="976" y="98" width="25" height="25" fill="#0046b7"/>
<rect x="1000" y="98" width="25" height="25" fill="#003cb6"/>
<rect x="1024" y="98" width="25" height="25" fill="#0031b5"/>
<rect x="1048" y="98" width="25" height="25" fill="#0026b5"/>
<rect x="1072" y="98" width="25" height="25" fill="#001ab4"/>
<rect x="1096" y="98" width="25" height="25" fill="#000fb3"/>
<rect x="1120" y="98" width="25" height="25" fill="#0004b2"/>
<rect x="1144" y="98" width="25" height="25" fill="#0001ac"/>
<rect x="1168" y="98" width="25" height="25" fill="#0000a4"/>
<rect x="1192" y="98" width="25" height="25" fill="#000099"/>
<rect x="1216" y="98" width="25" height="25" fill="#000090"/>
<rect x="1240" y="98" width="25" height="25" fill="#000088"/>
<rect x="1264" y="98" width="25" height="25" fill="#000082"/>
<rect x="1288" y="98" width="25" height="25" fill="#00007c"/>
<rect x="1312" y="98" width="25" height="25" fill="#000077"/>
<rect x="1336" y="98" width="25" height="25" fill="#000071"/>
<rect x="520" y="122" width="25" height="25" fill="#0077b8"/>
<rect x="544" y="122" width="25" height="25" fill="#0075b8"/>
<rect x="568" y="122" width="25" height="25" fill="#0073b8"/>
<rect x="592" y="122" width="25" height="25" fill="#0071b8"/>
<rect x="616" y="122" width="25" height="25" fill="#006eb8"/>
<rect x="640" y="122" width="25" height="25" fill="#006cb8"/>
<rect x="664" y="122" width="25" height="25" fill="#0069b7"/>
<rect x="688" y="122" width="25" height="25" fill="#0068b7"/>
<rect x="712" y="122" width="25" height="25" fill="#0067b7"/>
<rect x="736" y="122" width="25" height="25" fill="#0066b7"/>
<rect x="760" y="122" width="73" height="25" fill="#0067b7"/>
<rect x="832" y="122" width="25" height="25" fill="#0066b7"/>
<rect x="856" y="122" width="25" height="25" fill="#0065b7"/>
<rect x="880" y="122" width="25" height="25" fill="#0063b7"/>
<rect x="904" y="122" width="25" height="25" fill="#0061b7"/>
<rect x="928" y="122" width="25" height="25" fill="#005cb7"/>
<rect x="952" y="122" width="25" height="25" fill="#0056b7"/>
<rect x="976" y="122" width="25" height="25" fill="#004eb7"/>
<rect x="1000" y="122" width="25" height="25" fill="#0044b6"/>
<rect x="1024" y="122" width="25" height="25" fill="#0039b6"/>
<rect x="1048" y="122" width="25" height="25" fill="#002db5"/>
<rect x="1072" y="122" width="25" height="25" fill="#0021b5"/>
<rect x="1096" y="122" width="25" height="25" fill="#0015b4"/>
<rect x="1120" y="122" width="25" height="25" fill="#000bb3"/>
<rect x="1144" y="122" width="25" height="25" fill="#0002b1"/>
<rect x="1168" y="122" width="25" height="25" fill="#0001a9"/>
<rect x="1192" y="122" width="25" height="25" fill="#0000a0"/>
<rect x="1216" y="122" width="25" height="25" fill="#000097"/>
<rect x="1240" y="122" width="25" height="25" fill="#00008f"/>
<rect x="1264" y="122" width="25" height="25" fill="#000088"/>
<rect x="1288" y="122" width="25" height="25" fill="#000082"/>
<rect x="1312" y="122" width="25" height="25" fill="#00007c"/>
<rect x="1336" y="122" width="25" height="25" fill="#000077"/>
<rect x="520" y="146" width="25" height="25" fill="#007bb8"/>
<rect x="544" y="146" width="25" height="25" fill="#007ab8"/>
<rect x="568" y="146" width="25" height="25" fill="#0077b8"/>
<rect x="592" y="146" width="25" height="25" fill="#0075b8"/>
<rect x="616" y="146" width="25" height="25" fill="#0072b8"/>
<rect x="640" y="146" width="25" height="25" fill="#0070b8"/>
<rect x="664" y="146" width="25" height="25" fill="#006db8"/>
<rect x="688" y="146" width="97" height="25" fill="#006bb8"/>
<rect x="784" y="146" width="73" height="25" fill="#006cb8"/>
<rect x="856" y="146" width="25" height="25" fill="#006bb8"/>
<rect x="880" y="146" width="25" height="25" fill="#0069b7"/>
<rect x="904" y="146" width="25" height="25" fill="#0067b7"/>
<rect x="928" y="146" width="25" height="25" fill="#0063b7"/>
<rect x="952" y="146" width="25" height="25" fill="#005db7"/>
<rect x="976" y="146" width="25" height="25" fill="#0055b7"/>
<rect x="1000" y="146" width="25" height="25" fill="#004bb7"/>
<rect x="1024" y="146" width="25" height="25" fill="#0040b6"/>
<rect x="1048" y="146" width="25" height="25" fill="#0035b6"/>
<rect x="1072" y="146" width="25" height="25" fill="#0029b5"/>
<rect x="1096" y="146" width="25" height="25" fill="#001db4"/>
<rect x="1120" y="146" width="25" height="25" fill="#0011b4"/>
<rect x="1144" y="146" width="25" height="25" fill="#0007b3"/>
<rect x="1168" y="146" width="25" height="25" fill="#0001ae"/>
<rect x="1192" y="146" width="25" height="25" fill="#0000a7"/>
<rect x="1216" y="146" width="25" height="25" fill="#00009f"/>
<rect x="1240" y="146" width="25" height="25" fill="#000097"/>
<rect x="1264" y="146" width="25" height="25" fill="#00008f"/>
<rect x="1288" y="146" width="25" height="25" fill="#000088"/>
<rect x="1312" y="146" width="25" height="25" fill="#000082"/>
<rect x="1336" y="146" width="25" height="25" fill="#00007d"/>
<rect x="520" y="170" width="25" height="25" fill="#007fb8"/>
<rect x="544" y="170" width="25" height="25" fill="#007eb8"/>
<rect x="568" y="170" width="25" height="25" fill="#007cb8"/>
<rect x="592" y="170" width="25" height="25" fill="#007ab8"/>
<rect x="616" y="170" width="25" height="25" fill="#0077b8"/>
<rect x="640" y="170" width="25" height="25" fill="#0074b8"/>
<rect x="664" y="170" width="25" height="25" fill="#0072b8"/>
<rect x="688" y="170" width="73" height="25" fill="#006fb8"/>
<rect x="760" y="170" width="49" height="25" fill="#0070b8"/>
<rect x="808" y="170" width="49" height="25" fill="#0071b8"/>
<rect x="856" y="170" width="25" height="25" fill="#0070b8"/>
<rect x="880" y="170" width="25" height="25" fill="#006fb8"/>
<rect x="904" y="170" width="25" height="25" fill="#006cb8"/>
<rect x="928" y="170" width="25" height="25" fill="#0068b7"/>
<rect x="952" y="170" width="25" height="25" fill="#0062b7"/>
<rect x="976" y="170" width="25" height="25" fill="#005ab7"/>
<rect x="1000" y="170" width="25" height="25" fill="#0051b7"/>
<rect x="1024" y="170" width="25" height="25" fill="#0047b7"/>
<rect x="1048" y="170" width="25" height="25" fill="#003cb6"/>
<rect x="1072" y="170" width="25" height="25" fill="#0030b5"/>
<rect x="1096" y="170" width="25" height="25" fill="#0025b5"/>
<rect x="1120" y="170" width="25" height="25" fill="#0019b4"/>
<rect x="1144" y="170" width="25" height="25" fill="#000fb3"/>
<rect x="1168" y="170" width="25" height="25" fill="#0005b2"/>
<rect x="1192" y="170" width="25" height="25" fill="#0001ad"/>
<rect x="1216" y="170" width="25" height="25" fill="#0000a7"/>
<rect x="1240" y="170" width="25" height="25" fill="#00009f"/>
<rect x="1264" y="170" width="25" height="25" fill="#000097"/>
<rect x="1288" y="170" width="25" height="25" fill="#000090"/>
<rect x="1312" y="170" width="25" height="25" fill="#000089"/>
<rect x="1336" y="170" width="25" height="25" fill="#000083"/>
<rect x="520" y="194" width="25" height="25" fill="#0084b8"/>
<rect x="544" y="194" width="25" height="25" fill="#0082b8"/>
<rect x="568" y="194" width="25" height="25" fill="#0081b8"/>
<rect x="592" y="194" width="25" height="25" fill="#007fb8"/>
<rect x="616" y="194" width="25" height="25" fill="#007cb8"/>
<rect x="640" y="194" width="25" height="25" fill="#0079b8"/>
<rect x="664" y="194" width="25" height="25" fill="#0076b8"/>
<rect x="688" y="194" width="25" height="25" fill="#0074b8"/>
<rect x="712" y="194" width="25" height="25" fill="#0073b8"/>
<rect x="736" y="194" width="49" height="25" fill="#0074b8"/>
<rect x="784" y="194" width="25" height="25" fill="#0075b8"/>
<rect x="808" y="194" width="49" height="25" fill="#0076b8"/>
<rect x="856" y="194" width="25" height="25" fill="#0075b8"/>
<rect x="880" y="194" width="25" height="25" fill="#0074b8"/>
<rect x="904" y="194" width="25" height="25" fill="#0071b8"/>
<rect x="928" y="194" width="25" height="25" fill="#006db8"/>
<rect x="952" y="194" width="25" height="25" fill="#0067b7"/>
<rect x="976" y="194" width="25" height="25" fill="#0060b7"/>
<rect x="1000" y="194" width="25" height="25" fill="#0057b7"/>
<rect x="1024" y="194" width="25" height="25" fill="#004db7"/>
<rect x="1048" y="194" width="25" height="25" fill="#0043b6"/>
<rect x="1072" y="194" width="25" height="25" fill="#0038b6"/>
<rect x="1096" y="194" width="25" height="25" fill="#002cb5"/>
<rect x="1120" y="194" width="25" height="25" fill="#0021b5"/>
<rect x="1144" y="194" width="25" height="25" fill="#0017b4"/>
<rect x="1168" y="194" width="25" height="25" fill="#000db3"/>
<rect x="1192" y="194" width="25" height="25" fill="#0004b2"/>
<rect x="1216" y="194" width="25" height="25" fill="#0001ad"/>
<rect x="1240" y="194" width="25" height="25" fill="#0000a7"/>
<rect x="1264" y="194" width="25" height="25" fill="#0000a0"/>
<rect x="1288" y="194" width="25" height="25" fill="#000099"/>
<rect x="1312" y="194" width="25" height="25" fill="#000091"/>
<rect x="1336" y="194" width="25" height="25" fill="#00008a"/>
<rect x="520" y="218" width="49" height="25" fill="#0087b8"/>
<rect x="568" y="218" width="25" height="25" fill="#0085b8"/>
<rect x="592" y="218" width="25" height="25" fill="#0084b8"/>
<rect x="616" y="218" width="25" height="25" fill="#0081b8"/>
<rect x="640" y="218" width="25" height="25" fill="#007eb8"/>
<rect x="664" y="218" width="25" height="25" fill="#007bb8"/>
<rect x="688" y="218" width="97" height="25" fill="#0079b8"/>
<rect x="784" y="218" width="97" height="25" fill="#007ab8"/>
<rect x="880" y="218" width="25" height="25" fill="#0078b8"/>
<rect x="904" y="218" width="25" height="25" fill="#0075b8"/>
<rect x="928" y="218" width="25" height="25" fill="#0071b8"/>
<rect x="952" y="218" width="25" height="25" fill="#006cb8"/>
<rect x="976" y="218" width="25" height="25" fill="#0065b7"/>
<rect x="1000" y="218" width="25" height="25" fill="#005cb7"/>
<rect x="1024" y="218" width="25" height="25" fill="#0053b7"/>
<rect x="1048" y="218" width="25" height="25" fill="#0049b7"/>
<rect x="1072" y="218" width="25" height="25" fill="#003fb6"/>
<rect x="1096" y="218" width="25" height="25" fill="#0034b6"/>
<rect x="1120" y="218" width="25" height="25" fill="#0029b5"/>
<rect x="1144" y="218" width="25" height="25" fill="#001fb5"/>
<rect x="1168" y="218" width="25" height="25" fill="#0015b4"/>
<rect x="1192" y="218" width="25" height="25" fill="#000db3"/>
<rect x="1216" y="218" width="25" height="25" fill="#0005b2"/>
<rect x="1240" y="218" width="25" height="25" fill="#0001ae"/>
<rect x="1264" y="218" width="25" height="25" fill="#0000a8"/>
<rect x="1288" y="218" width="25" height="25" fill="#0000a2"/>
<rect x="1312" y="218" width="25" height="25" fill="#00009a"/>
<rect x="1336" y="218" width="25" height="25" fill="#000093"/>
<rect x="520" y="242" width="73" height="25" fill="#008ab7"/>
<rect x="592" y="242" width="25" height="25" fill="#0089b8"/>
<rect x="616" y="242" width="25" height="25" fill="#0086b8"/>
<rect x="640" y="242" width="25" height="25" fill="#0083b8"/>
<rect x="664" y="242" width="25" height="25" fill="#0080b8"/>
<rect x="688" y="242" width="25" height="25" fill="#007fb8"/>
<rect x="712" y="242" width="25" height="25" fill="#007eb8"/>
<rect x="736" y="242" width="25" height="25" fill="#007db8"/>
<rect x="760" y="242" width="49" height="25" fill="#007eb8"/>
<rect x="808" y="242" width="49" height="25" fill="#007fb8"/>
<rect x="856" y="242" width="25" height="25" fill="#007eb8"/>
<rect x="880" y="242" width="25" height="25" fill="#007cb8"/>
<rect x="904" y="242" width="25" height="25" fill="#0079b8"/>
<rect x="928" y="242" width="25" height="25" fill="#0075b8"/>
<rect x="952" y="242" width="25" height="25" fill="#0070b8"/>
<rect x="976" y="242" width="25" height="25" fill="#0069b7"/>
<rect x="1000" y="242" width="25" height="25" fill="#0061b7"/>
<rect x="1024" y="242" width="25" height="25" fill="#0059b7"/>
<rect x="1048" y="242" width="25" height="25" fill="#004fb7"/>
<rect x="1072" y="242" width="25" height="25" fill="#0046b6"/>
<rect x="1096" y="242" width="25" height="25" fill="#003bb6"/>
<rect x="1120" y="242" width="25" height="25" fill="#0031b5"/>
<rect x="1144" y="242" width="25" height="25" fill="#0028b5"/>
<rect x="1168" y="242" width="25" height="25" fill="#001eb5"/>
<rect x="1192" y="242" width="25" height="25" fill="#0015b4"/>
<rect x="1216" y="242" width="25" height="25" fill="#000db3"/>
<rect x="1240" y="242" width="25" height="25" fill="#0006b2"/>
<rect x="1264" y="242" width="25" height="25" fill="#0002af"/>
<rect x="1288" y="242" width="25" height="25" fill="#0001a9"/>
<rect x="1312" y="242" width="25" height="25" fill="#0000a3"/>
<rect x="1336" y="242" width="25" height="25" fill="#00009b"/>
<rect x="520" y="266" width="97" height="25" fill="#008db7"/>
<rect x="616" y="266" width="25" height="25" fill="#008ab7"/>
<rect x="640" y="266" width="25" height="25" fill="#0088b8"/>
<rect x="664" y="266" width="25" height="25" fill="#0085b8"/>
<rect x="688" y="266" width="49" height="25" fill="#0083b8"/>
<rect x="736" y="266" width="49" height="25" fill="#0082b8"/>
<rect x="784" y="266" width="73" height="25" fill="#0083b8"/>
<rect x="856" y="266" width="25" height="25" fill="#0082b8"/>
<rect x="880" y="266" width="25" height="25" fill="#0080b8"/>
<rect x="904" y="266" width="25" height="25" fill="#007db8"/>
<rect x="928" y="266" width="25" height="25" fill="#0079b8"/>
<rect x="952" y="266" width="25" height="25" fill="#0074b8"/>
<rect x="976" y="266" width="25" height="25" fill="#006eb8"/>
<rect x="1000" y="266" width="25" height="25" fill="#0066b7"/>
<rect x="1024" y="266" width="25" height="25" fill="#005eb7"/>
<rect x="1048" y="266" width="25" height="25" fill="#0055b7"/>
<rect x="1072" y="266" width="25" height="25" fill="#004cb7"/>
<rect x="1096" y="266" width="25" height="25" fill="#0043b6"/>
<rect x="1120" y="266" width="25" height="25" fill="#0039b6"/>
<rect x="1144" y="266" width="25" height="25" fill="#0030b5"/>
<rect x="1168" y="266" width="25" height="25" fill="#0027b5"/>
<rect x="1192" y="266" width="25" height="25" fill="#001eb4"/>
<rect x="1216" y="266" width="25" height="25" fill="#0016b4"/>
<rect x="1240" y="266" width="25" height="25" fill="#000eb3"/>
<rect x="1264" y="266" width="25" height="25" fill="#0007b3"/>
<rect x="1288" y="266" width="25" height="25" fill="#0002b0"/>
<rect x="1312" y="266" width="25" height="25" fill="#0001aa"/>
<rect x="1336" y="266" width="25" height="25" fill="#0000a4"/>
<rect x="520" y="290" width="49" height="25" fill="#008eb7"/>
<rect x="568" y="290" width="49" height="25" fill="#008fb7"/>
<rect x="616" y="290" width="25" height="25" fill="#008db7"/>
<rect x="640" y="290" width="25" height="25" fill="#008bb7"/>
<rect x="664" y="290" width="25" height="25" fill="#0089b8"/>
<rect x="688" y="290" width="25" height="25" fill="#0088b8"/>
<rect x="712" y="290" width="25" height="25" fill="#0087b8"/>
<rect x="736" y="290" width="49" height="25" fill="#0086b8"/>
<rect x="784" y="290" width="49" height="25" fill="#0087b8"/>
<rect x="832" y="290" width="25" height="25" fill="#0086b8"/>
<rect x="856" y="290" width="25" height="25" fill="#0085b8"/>
<rect x="880" y="290" width="25" height="25" fill="#0084b8"/>
<rect x="904" y="290" width="25" height="25" fill="#0081b8"/>
<rect x="928" y="290" width="25" height="25" fill="#007db8"/>
<rect x="952" y="290" width="25" height="25" fill="#0078b8"/>
<rect x="976" y="290" width="25" height="25" fill="#0072b8"/>
<rect x="1000" y="290" width="25" height="25" fill="#006bb8"/>
<rect x="1024" y="290" width="25" height="25" fill="#0063b7"/>
<rect x="1048" y="290" width="25" height="25" fill="#005bb7"/>
<rect x="1072" y="290" width="25" height="25" fill="#0052b7"/>
<rect x="1096" y="290" width="25" height="25" fill="#0049b7"/>
<rect x="1120" y="290" width="25" height="25" fill="#0040b6"/>
<rect x="1144" y="290" width="25" height="25" fill="#0037b6"/>
<rect x="1168" y="290" width="25" height="25" fill="#002fb5"/>
<rect x="1192" y="290" width="25" height="25" fill="#0026b5"/>
<rect x="1216" y="290" width="25" height="25" fill="#001eb5"/>
<rect x="1240" y="290" width="25" height="25" fill="#0016b4"/>
<rect x="1264" y="290" width="25" height="25" fill="#000eb3"/>
<rect x="1288" y="290" width="25" height="25" fill="#0007b3"/>
<rect x="1312" y="290" width="25" height="25" fill="#0002b0"/>
<rect x="1336" y="290" width="25" height="25" fill="#0001aa"/>
<rect x="520" y="314" width="121" height="25" fill="#008fb7"/>
<rect x="640" y="314" width="25" height="25" fill="#008db7"/>
<rect x="664" y="314" width="25" height="25" fill="#008cb7"/>
<rect x="688" y="314" width="49" height="25" fill="#008bb7"/>
<rect x="736" y="314" width="121" height="25" fill="#008ab7"/>
<rect x="856" y="314" width="25" height="25" fill="#0089b8"/>
<rect x="880" y="314" width="25" height="25" fill="#0087b8"/>
<rect x="904" y="314" width="25" height="25" fill="#0084b8"/>
<rect x="928" y="314" width="25" height="25" fill="#0080b8"/>
<rect x="952" y="314" width="25" height="25" fill="#007bb8"/>
<rect x="976" y="314" width="25" height="25" fill="#0076b8"/>
<rect x="1000" y="314" width="25" height="25" fill="#006fb8"/>
<rect x="1024" y="314" width="25" height="25" fill="#0068b7"/>
<rect x="1048" y="314" width="25" height="25" fill="#0060b7"/>
<rect x="1072" y="314" width="25" height="25" fill="#0058b7"/>
<rect x="1096" y="314" width="25" height="25" fill="#004fb7"/>
<rect x="1120" y="314" width="25" height="25" fill="#0047b7"/>
<rect x="1144" y="314" width="25" height="25" fill="#003eb6"/>
<rect x="1168" y="314" width="25" height="25" fill="#0036b6"/>
<rect x="1192" y="314" width="25" height="25" fill="#002eb5"/>
<rect x="1216" y="314" width="25" height="25" fill="#0026b5"/>
<rect x="1240" y="314" width="25" height="25" fill="#001eb4"/>
<rect x="1264" y="314" width="25" height="25" fill="#0015b4"/>
<rect x="1288" y="314" width="25" height="25" fill="#000eb3"/>
<rect x="1312" y="314" width="25" height="25" fill="#0006b2"/>
<rect x="1336" y="314" width="25" height="25" fill="#0002b0"/>
<rect x="520" y="338" width="25" height="25" fill="#0090b7"/>
<rect x="544" y="338" width="49" height="25" fill="#008fb7"/>
<rect x="592" y="338" width="49" height="25" fill="#0090b7"/>
<rect x="640" y="338" width="25" height="25" fill="#008fb7"/>
<rect x="664" y="338" width="73" height="25" fill="#008eb7"/>
<rect x="736" y="338" width="121" height="25" fill="#008db7"/>
<rect x="856" y="338" width="25" height="25" fill="#008bb7"/>
<rect x="880" y="338" width="25" height="25" fill="#008ab7"/>
<rect x="904" y="338" width="25" height="25" fill="#0087b8"/>
<rect x="928" y="338" width="25" height="25" fill="#0083b8"/>
<rect x="952" y="338" width="25" height="25" fill="#007fb8"/>
<rect x="976" y="338" width="25" height="25" fill="#0079b8"/>
<rect x="1000" y="338" width="25" height="25" fill="#0073b8"/>
<rect x="1024" y="338" width="25" height="25" fill="#006cb8"/>
<rect x="1048" y="338" width="25" height="25" fill="#0065b7"/>
<rect x="1072" y="338" width="25" height="25" fill="#005db7"/>
<rect x="1096" y="338" width="25" height="25" fill="#0055b7"/>
<rect x="1120" y="338" width="25" height="25" fill="#004db7"/>
<rect x="1144" y="338" width="25" height="25" fill="#0045b6"/>
<rect x="1168" y="338" width="25" height="25" fill="#003db6"/>
<rect x="1192" y="338" width="25" height="25" fill="#0035b6"/>
<rect x="1216" y="338" width="25" height="25" fill="#002db5"/>
<rect x="1240" y="338" width="25" height="25" fill="#0025b5"/>
<rect x="1264" y="338" width="25" height="25" fill="#001cb4"/>
<rect x="1288" y="338" width="25" height="25" fill="#0014b4"/>
<rect x="1312" y="338" width="25" height="25" fill="#000db3"/>
<rect x="1336" y="338" width="25" height="25" fill="#0005b2"/>
<rect x="520" y="362" width="25" height="25" fill="#0091b7"/>
<rect x="544" y="362" width="289" height="25" fill="#0090b7"/>
<rect x="832" y="362" width="25" height="25" fill="#008fb7"/>
<rect x="856" y="362" width="25" height="25" fill="#008eb7"/>
<rect x="880" y="362" width="25" height="25" fill="#008cb7"/>
<rect x="904" y="362" width="25" height="25" fill="#008ab7"/>
<rect x="928" y="362" width="25" height="25" fill="#0086b8"/>
<rect x="952" y="362" width="25" height="25" fill="#0082b8"/>
<rect x="976" y="362" width="25" height="25" fill="#007db8"/>
<rect x="1000" y="362" width="25" height="25" fill="#0077b8"/>
<rect x="1024" y="362" width="25" height="25" fill="#0070b8"/>
<rect x="1048" y="362" width="25" height="25" fill="#0069b7"/>
<rect x="1072" y="362" width="25" height="25" fill="#0062b7"/>
<rect x="1096" y="362" width="25" height="25" fill="#005ab7"/>
<rect x="1120" y="362" width="25" height="25" fill="#0053b7"/>
<rect x="1144" y="362" width="25" height="25" fill="#004bb7"/>
<rect x="1168" y="362" width="25" height="25" fill="#0043b6"/>
<rect x="1192" y="362" width="25" height="25" fill="#003bb6"/>
<rect x="1216" y="362" width="25" height="25" fill="#0033b6"/>
<rect x="1240" y="362" width="25" height="25" fill="#002bb5"/>
<rect x="1264" y="362" width="25" height="25" fill="#0023b5"/>
<rect x="1288" y="362" width="25" height="25" fill="#001ab4"/>
<rect x="1312" y="362" width="25" height="25" fill="#0012b4"/>
<rect x="1336" y="362" width="25" height="25" fill="#000bb3"/>
<rect x="520" y="386" width="49" height="25" fill="#0092b7"/>
<rect x="568" y="386" width="73" height="25" fill="#0091b7"/>
<rect x="640" y="386" width="49" height="25" fill="#0092b7"/>
<rect x="688" y="386" width="145" height="25" fill="#0093b7"/>
<rect x="832" y="386" width="25" height="25" fill="#0092b7"/>
<rect x="856" y="386" width="25" height="25" fill="#0091b7"/>
<rect x="880" y="386" width="25" height="25" fill="#008fb7"/>
<rect x="904" y="386" width="25" height="25" fill="#008cb7"/>
<rect x="928" y="386" width="25" height="25" fill="#0089b8"/>
<rect x="952" y="386" width="25" height="25" fill="#0085b8"/>
<rect x="976" y="386" width="25" height="25" fill="#0080b8"/>
<rect x="1000" y="386" width="25" height="25" fill="#007ab8"/>
<rect x="1024" y="386" width="25" height="25" fill="#0074b8"/>
<rect x="1048" y="386" width="25" height="25" fill="#006db8"/>
<rect x="1072" y="386" width="25" height="25" fill="#0066b7"/>
<rect x="1096" y="386" width="25" height="25" fill="#005fb7"/>
<rect x="1120" y="386" width="25" height="25" fill="#0058b7"/>
<rect x="1144" y="386" width="25" height="25" fill="#0050b7"/>
<rect x="1168" y="386" width="25" height="25" fill="#0049b7"/>
<rect x="1192" y="386" width="25" height="25" fill="#0041b6"/>
<rect x="1216" y="386" width="25" height="25" fill="#0039b6"/>
<rect x="1240" y="386" width="25" height="25" fill="#0031b5"/>
<rect x="1264" y="386" width="25" height="25" fill="#0029b5"/>
<rect x="1288" y="386" width="25" height="25" fill="#0020b5"/>
<rect x="1312" y="386" width="25" height="25" fill="#0018b4"/>
<rect x="1336" y="386" width="25" height="25" fill="#0011b4"/>
<rect x="520" y="410" width="25" height="25" fill="#0094b7"/>
<rect x="544" y="410" width="97" height="25" fill="#0093b7"/>
<rect x="640" y="410" width="49" height="25" fill="#0094b7"/>
<rect x="688" y="410" width="145" height="25" fill="#0095b6"/>
<rect x="832" y="410" width="25" height="25" fill="#0094b7"/>
<rect x="856" y="410" width="25" height="25" fill="#0093b7"/>
<rect x="880" y="410" width="25" height="25" fill="#0091b7"/>
<rect x="904" y="410" width="25" height="25" fill="#008fb7"/>
<rect x="928" y="410" width="25" height="25" fill="#008cb7"/>
<rect x="952" y="410" width="25" height="25" fill="#0088b8"/>
<rect x="976" y="410" width="25" height="25" fill="#0083b8"/>
<rect x="1000" y="410" width="25" height="25" fill="#007eb8"/>
<rect x="1024" y="410" width="25" height="25" fill="#0078b8"/>
<rect x="1048" y="410" width="25" height="25" fill="#0071b8"/>
<rect x="1072" y="410" width="25" height="25" fill="#006bb8"/>
<rect x="1096" y="410" width="25" height="25" fill="#0064b7"/>
<rect x="1120" y="410" width="25" height="25" fill="#005cb7"/>
<rect x="1144" y="410" width="25" height="25" fill="#0055b7"/>
<rect x="1168" y="410" width="25" height="25" fill="#004eb7"/>
<rect x="1192" y="410" width="25" height="25" fill="#0046b7"/>
<rect x="1216" y="410" width="25" height="25" fill="#003eb6"/>
<rect x="1240" y="410" width="25" height="25" fill="#0036b6"/>
<rect x="1264" y="410" width="25" height="25" fill="#002eb5"/>
<rect x="1288" y="410" width="25" height="25" fill="#0026b5"/>
<rect x="1312" y="410" width="25" height="25" fill="#001eb4"/>
<rect x="1336" y="410" width="25" height="25" fill="#0016b4"/>
<rect x="520" y="434" width="49" height="25" fill="#0095b6"/>
<rect x="568" y="434" width="49" height="25" fill="#0094b7"/>
<rect x="616" y="434" width="49" height="25" fill="#0095b6"/>
<rect x="664" y="434" width="25" height="25" fill="#0096b6"/>
<rect x="688" y="434" width="49" height="25" fill="#0097b6"/>
<rect x="736" y="434" width="73" height="25" fill="#0098b6"/>
<rect x="808" y="434" width="49" height="25" fill="#0097b6"/>
<rect x="856" y="434" width="25" height="25" fill="#0095b6"/>
<rect x="880" y="434" width="25" height="25" fill="#0094b7"/>
<rect x="904" y="434" width="25" height="25" fill="#0091b7"/>
<rect x="928" y="434" width="25" height="25" fill="#008eb7"/>
<rect x="952" y="434" width="25" height="25" fill="#008ab7"/>
<rect x="976" y="434" width="25" height="25" fill="#0086b8"/>
<rect x="1000" y="434" width="25" height="25" fill="#0081b8"/>
<rect x="1024" y="434" width="25" height="25" fill="#007bb8"/>
<rect x="1048" y="434" width="25" height="25" fill="#0075b8"/>
<rect x="1072" y="434" width="25" height="25" fill="#006eb8"/>
<rect x="1096" y="434" width="25" height="25" fill="#0068b7"/>
<rect x="1120" y="434" width="25" height="25" fill="#0061b7"/>
<rect x="1144" y="434" width="25" height="25" fill="#005ab7"/>
<rect x="1168" y="434" width="25" height="25" fill="#0053b7"/>
<rect x="1192" y="434" width="25" height="25" fill="#004bb7"/>
<rect x="1216" y="434" width="25" height="25" fill="#0044b6"/>
<rect x="1240" y="434" width="25" height="25" fill="#003bb6"/>
<rect x="1264" y="434" width="25" height="25" fill="#0033b6"/>
<rect x="1288" y="434" width="25" height="25" fill="#002bb5"/>
<rect x="1312" y="434" width="25" height="25" fill="#0023b5"/>
<rect x="1336" y="434" width="25" height="25" fill="#001cb4"/>
<rect x="520" y="458" width="49" height="25" fill="#0097b6"/>
<rect x="568" y="458" width="25" height="25" fill="#0096b6"/>
<rect x="592" y="458" width="49" height="25" fill="#0097b6"/>
<rect x="640" y="458" width="49" height="25" fill="#0098b6"/>
<rect x="688" y="458" width="25" height="25" fill="#0099b6"/>
<rect x="712" y="458" width="121" height="25" fill="#009ab6"/>
<rect x="832" y="458" width="25" height="25" fill="#0099b6"/>
<rect x="856" y="458" width="25" height="25" fill="#0098b6"/>
<rect x="880" y="458" width="25" height="25" fill="#0096b6"/>
<rect x="904" y="458" width="25" height="25" fill="#0093b7"/>
<rect x="928" y="458" width="25" height="25" fill="#0090b7"/>
<rect x="952" y="458" width="25" height="25" fill="#008db7"/>
<rect x="976" y="458" width="25" height="25" fill="#0088b8"/>
<rect x="1000" y="458" width="25" height="25" fill="#0084b8"/>
<rect x="1024" y="458" width="25" height="25" fill="#007eb8"/>
<rect x="1048" y="458" width="25" height="25" fill="#0078b8"/>
<rect x="1072" y="458" width="25" height="25" fill="#0072b8"/>
<rect x="1096" y="458" width="25" height="25" fill="#006bb8"/>
<rect x="1120" y="458" width="25" height="25" fill="#0065b7"/>
<rect x="1144" y="458" width="25" height="25" fill="#005eb7"/>
<rect x="1168" y="458" width="25" height="25" fill="#0057b7"/>
<rect x="1192" y="458" width="25" height="25" fill="#0050b7"/>
<rect x="1216" y="458" width="25" height="25" fill="#0049b7"/>
<rect x="1240" y="458" width="25" height="25" fill="#0040b6"/>
<rect x="1264" y="458" width="25" height="25" fill="#0038b6"/>
<rect x="1288" y="458" width="25" height="25" fill="#0030b5"/>
<rect x="1312" y="458" width="25" height="25" fill="#0028b5"/>
<rect x="1336" y="458" width="25" height="25" fill="#0021b5"/>
<rect x="520" y="482" width="49" height="25" fill="#0099b6"/>
<rect x="568" y="482" width="25" height="25" fill="#0098b6"/>
<rect x="592" y="482" width="49" height="25" fill="#0099b6"/>
<rect x="640" y="482" width="25" height="25" fill="#009ab6"/>
<rect x="664" y="482" width="49" height="25" fill="#009bb6"/>
<rect x="712" y="482" width="121" height="25" fill="#009cb6"/>
<rect x="832" y="482" width="25" height="25" fill="#009bb6"/>
<rect x="856" y="482" width="25" height="25" fill="#009ab6"/>
<rect x="880" y="482" width="25" height="25" fill="#0098b6"/>
<rect x="904" y="482" width="25" height="25" fill="#0096b6"/>
<rect x="928" y="482" width="25" height="25" fill="#0093b7"/>
<rect x="952" y="482" width="25" height="25" fill="#008fb7"/>
<rect x="976" y="482" width="25" height="25" fill="#008bb7"/>
<rect x="1000" y="482" width="25" height="25" fill="#0086b8"/>
<rect x="1024" y="482" width="25" height="25" fill="#0081b8"/>
<rect x="1048" y="482" width="25" height="25" fill="#007bb8"/>
<rect x="1072" y="482" width="25" height="25" fill="#0075b8"/>
<rect x="1096" y="482" width="25" height="25" fill="#006fb8"/>
<rect x="1120" y="482" width="25" height="25" fill="#0069b7"/>
<rect x="1144" y="482" width="25" height="25" fill="#0062b7"/>
<rect x="1168" y="482" width="25" height="25" fill="#005cb7"/>
<rect x="1192" y="482" width="25" height="25" fill="#0055b7"/>
<rect x="1216" y="482" width="25" height="25" fill="#004db7"/>
<rect x="1240" y="482" width="25" height="25" fill="#0045b6"/>
<rect x="1264" y="482" width="25" height="25" fill="#003db6"/>
<rect x="1288" y="482" width="25" height="25" fill="#0035b6"/>
<rect x="1312" y="482" width="25" height="25" fill="#002db5"/>
<rect x="1336" y="482" width="25" height="25" fill="#0026b5"/>
<rect x="520" y="506" width="121" height="25" fill="#009bb6"/>
<rect x="640" y="506" width="25" height="25" fill="#009cb6"/>
<rect x="664" y="506" width="49" height="25" fill="#009db6"/>
<rect x="712" y="506" width="121" height="25" fill="#009eb6"/>
<rect x="832" y="506" width="25" height="25" fill="#009db6"/>
<rect x="856" y="506" width="25" height="25" fill="#009cb6"/>
<rect x="880" y="506" width="25" height="25" fill="#009ab6"/>
<rect x="904" y="506" width="25" height="25" fill="#0098b6"/>
<rect x="928" y="506" width="25" height="25" fill="#0095b6"/>
<rect x="952" y="506" width="25" height="25" fill="#0091b7"/>
<rect x="976" y="506" width="25" height="25" fill="#008db7"/>
<rect x="1000" y="506" width="25" height="25" fill="#0089b8"/>
<rect x="1024" y="506" width="25" height="25" fill="#0084b8"/>
<rect x="1048" y="506" width="25" height="25" fill="#007eb8"/>
<rect x="1072" y="506" width="25" height="25" fill="#0078b8"/>
<rect x="1096" y="506" width="25" height="25" fill="#0072b8"/>
<rect x="1120" y="506" width="25" height="25" fill="#006cb8"/>
<rect x="1144" y="506" width="25" height="25" fill="#0066b7"/>
<rect x="1168" y="506" width="25" height="25" fill="#0060b7"/>
<rect x="1192" y="506" width="25" height="25" fill="#0059b7"/>
<rect x="1216" y="506" width="25" height="25" fill="#0051b7"/>
<rect x="1240" y="506" width="25" height="25" fill="#004ab7"/>
<rect x="1264" y="506" width="25" height="25" fill="#0042b6"/>
<rect x="1288" y="506" width="25" height="25" fill="#003ab6"/>
<rect x="1312" y="506" width="25" height="25" fill="#0033b6"/>
<rect x="1336" y="506" width="25" height="25" fill="#002bb5"/>
<rect x="520" y="530" width="97" height="25" fill="#009db6"/>
<rect x="616" y="530" width="49" height="25" fill="#009eb6"/>
<rect x="664" y="530" width="25" height="25" fill="#009fb6"/>
<rect x="688" y="530" width="145" height="25" fill="#00a0b5"/>
<rect x="832" y="530" width="25" height="25" fill="#009fb6"/>
<rect x="856" y="530" width="25" height="25" fill="#009eb6"/>
<rect x="880" y="530" width="25" height="25" fill="#009cb6"/>
<rect x="904" y="530" width="25" height="25" fill="#009ab6"/>
<rect x="928" y="530" width="25" height="25" fill="#0097b6"/>
<rect x="952" y="530" width="25" height="25" fill="#0093b7"/>
<rect x="976" y="530" width="25" height="25" fill="#0090b7"/>
<rect x="1000" y="530" width="25" height="25" fill="#008bb7"/>
<rect x="1024" y="530" width="25" height="25" fill="#0086b8"/>
<rect x="1048" y="530" width="25" height="25" fill="#0081b8"/>
<rect x="1072" y="530" width="25" height="25" fill="#007cb8"/>
<rect x="1096" y="530" width="25" height="25" fill="#0076b8"/>
<rect x="1120" y="530" width="25" height="25" fill="#0070b8"/>
<rect x="1144" y="530" width="25" height="25" fill="#006ab7"/>
<rect x="1168" y="530" width="25" height="25" fill="#0064b7"/>
<rect x="1192" y="530" width="25" height="25" fill="#005db7"/>
<rect x="1216" y="530" width="25" height="25" fill="#0056b7"/>
<rect x="1240" y="530" width="25" height="25" fill="#004eb7"/>
<rect x="1264" y="530" width="25" height="25" fill="#0047b7"/>
<rect x="1288" y="530" width="25" height="25" fill="#003fb6"/>
<rect x="1312" y="530" width="25" height="25" fill="#0038b6"/>
<rect x="1336" y="530" width="25" height="25" fill="#0031b5"/>
<rect x="520" y="554" width="97" height="25" fill="#009fb6"/>
<rect x="616" y="554" width="49" height="25" fill="#00a0b5"/>
<rect x="664" y="554" width="25" height="25" fill="#00a1b5"/>
<rect x="688" y="554" width="121" height="25" fill="#00a2b5"/>
<rect x="808" y="554" width="49" height="25" fill="#00a1b5"/>
<rect x="856" y="554" width="25" height="25" fill="#009fb6"/>
<rect x="880" y="554" width="25" height="25" fill="#009eb6"/>
<rect x="904" y="554" width="25" height="25" fill="#009cb6"/>
<rect x="928" y="554" width="25" height="25" fill="#0099b6"/>
<rect x="952" y="554" width="25" height="25" fill="#0095b6"/>
<rect x="976" y="554" width="25" height="25" fill="#0092b7"/>
<rect x="1000" y="554" width="25" height="25" fill="#008db7"/>
<rect x="1024" y="554" width="25" height="25" fill="#0089b8"/>
<rect x="1048" y="554" width="25" height="25" fill="#0084b8"/>
<rect x="1072" y="554" width="25" height="25" fill="#007eb8"/>
<rect x="1096" y="554" width="25" height="25" fill="#0079b8"/>
<rect x="1120" y="554" width="25" height="25" fill="#0073b8"/>
<rect x="1144" y="554" width="25" height="25" fill="#006eb8"/>
<rect x="1168" y="554" width="25" height="25" fill="#0068b7"/>
<rect x="1192" y="554" width="25" height="25" fill="#0061b7"/>
<rect x="1216" y="554" width="25" height="25" fill="#005ab7"/>
<rect x="1240" y="554" width="25" height="25" fill="#0053b7"/>
<rect x="1264" y="554" width="25" height="25" fill="#004cb7"/>
<rect x="1288" y="554" width="25" height="25" fill="#0045b6"/>
<rect x="1312" y="554" width="25" height="25" fill="#003db6"/>
<rect x="1336" y="554" width="25" height="25" fill="#0036b6"/>
<rect x="520" y="578" width="25" height="25" fill="#00a2b5"/>
<rect x="544" y="578" width="73" height="25" fill="#00a1b5"/>
<rect x="616" y="578" width="25" height="25" fill="#00a2b5"/>
<rect x="640" y="578" width="49" height="25" fill="#00a3b5"/>
<rect x="688" y="578" width="73" height="25" fill="#00a4b5"/>
<rect x="760" y="578" width="73" height="25" fill="#00a3b5"/>
<rect x="832" y="578" width="25" height="25" fill="#00a2b5"/>
<rect x="856" y="578" width="25" height="25" fill="#00a1b5"/>
<rect x="880" y="578" width="25" height="25" fill="#009fb6"/>
<rect x="904" y="578" width="25" height="25" fill="#009db6"/>
<rect x="928" y="578" width="25" height="25" fill="#009ab6"/>
<rect x="952" y="578" width="25" height="25" fill="#0097b6"/>
<rect x="976" y="578" width="25" height="25" fill="#0093b7"/>
<rect x="1000" y="578" width="25" height="25" fill="#008fb7"/>
<rect x="1024" y="578" width="25" height="25" fill="#008bb7"/>
<rect x="1048" y="578" width="25" height="25" fill="#0086b8"/>
<rect x="1072" y="578" width="25" height="25" fill="#0081b8"/>
<rect x="1096" y="578" width="25" height="25" fill="#007cb8"/>
<rect x="1120" y="578" width="25" height="25" fill="#0077b8"/>
<rect x="1144" y="578" width="25" height="25" fill="#0071b8"/>
<rect x="1168" y="578" width="25" height="25" fill="#006bb8"/>
<rect x="1192" y="578" width="25" height="25" fill="#0065b7"/>
<rect x="1216" y="578" width="25" height="25" fill="#005fb7"/>
<rect x="1240" y="578" width="25" height="25" fill="#0058b7"/>
<rect x="1264" y="578" width="25" height="25" fill="#0051b7"/>
<rect x="1288" y="578" width="25" height="25" fill="#004ab7"/>
<rect x="1312" y="578" width="25" height="25" fill="#0043b6"/>
<rect x="1336" y="578" width="25" height="25" fill="#003cb6"/>
<rect x="520" y="602" width="49" height="25" fill="#00a4b5"/>
<rect x="568" y="602" width="25" height="25" fill="#00a3b5"/>
<rect x="592" y="602" width="73" height="25" fill="#00a4b5"/>
<rect x="664" y="602" width="121" height="25" fill="#00a5b5"/>
<rect x="784" y="602" width="49" height="25" fill="#00a4b5"/>
<rect x="832" y="602" width="25" height="25" fill="#00a3b5"/>
<rect x="856" y="602" width="25" height="25" fill="#00a2b5"/>
<rect x="880" y="602" width="25" height="25" fill="#00a1b5"/>
<rect x="904" y="602" width="25" height="25" fill="#009eb6"/>
<rect x="928" y="602" width="25" height="25" fill="#009cb6"/>
<rect x="952" y="602" width="25" height="25" fill="#0099b6"/>
<rect x="976" y="602" width="25" height="25" fill="#0095b6"/>
<rect x="1000" y="602" width="25" height="25" fill="#0091b7"/>
<rect x="1024" y="602" width="25" height="25" fill="#008db7"/>
<rect x="1048" y="602" width="25" height="25" fill="#0089b8"/>
<rect x="1072" y="602" width="25" height="25" fill="#0084b8"/>
<rect x="1096" y="602" width="25" height="25" fill="#007fb8"/>
<rect x="1120" y="602" width="25" height="25" fill="#007ab8"/>
<rect x="1144" y="602" width="25" height="25" fill="#0075b8"/>
<rect x="1168" y="602" width="25" height="25" fill="#006fb8"/>
<rect x="1192" y="602" width="25" height="25" fill="#0069b7"/>
<rect x="1216" y="602" width="25" height="25" fill="#0063b7"/>
<rect x="1240" y="602" width="25" height="25" fill="#005db7"/>
<rect x="1264" y="602" width="25" height="25" fill="#0056b7"/>
<rect x="1288" y="602" width="25" height="25" fill="#004fb7"/>
<rect x="1312" y="602" width="25" height="25" fill="#0048b7"/>
<rect x="1336" y="602" width="25" height="25" fill="#0041b6"/>
<rect x="520" y="626" width="169" height="25" fill="#00a6b5"/>
<rect x="688" y="626" width="49" height="25" fill="#00a7b5"/>
<rect x="736" y="626" width="49" height="25" fill="#00a6b5"/>
<rect x="784" y="626" width="49" height="25" fill="#00a5b5"/>
<rect x="832" y="626" width="25" height="25" fill="#00a4b5"/>
<rect x="856" y="626" width="25" height="25" fill="#00a3b5"/>
<rect x="880" y="626" width="25" height="25" fill="#00a1b5"/>
<rect x="904" y="626" width="25" height="25" fill="#009fb6"/>
<rect x="928" y="626" width="25" height="25" fill="#009db6"/>
<rect x="952" y="626" width="25" height="25" fill="#009ab6"/>
<rect x="976" y="626" width="25" height="25" fill="#0097b6"/>
<rect x="1000" y="626" width="25" height="25" fill="#0093b7"/>
<rect x="1024" y="626" width="25" height="25" fill="#008fb7"/>
<rect x="1048" y="626" width="25" height="25" fill="#008bb7"/>
<rect x="1072" y="626" width="25" height="25" fill="#0086b8"/>
<rect x="1096" y="626" width="25" height="25" fill="#0082b8"/>
<rect x="1120" y="626" width="25" height="25" fill="#007db8"/>
<rect x="1144" y="626" width="25" height="25" fill="#0078b8"/>
<rect x="1168" y="626" width="25" height="25" fill="#0073b8"/>
<rect x="1192" y="626" width="25" height="25" fill="#006db8"/>
<rect x="1216" y="626" width="25" height="25" fill="#0068b7"/>
<rect x="1240" y="626" width="25" height="25" fill="#0062b7"/>
<rect x="1264" y="626" width="25" height="25" fill="#005bb7"/>
<rect x="1288" y="626" width="25" height="25" fill="#0054b7"/>
<rect x="1312" y="626" width="25" height="25" fill="#004eb7"/>
<rect x="1336" y="626" width="25" height="25" fill="#0047b7"/>
<rect x="520" y="650" width="73" height="25" fill="#01a8b4"/>
<rect x="592" y="650" width="25" height="25" fill="#01a7b4"/>
<rect x="616" y="650" width="121" height="25" fill="#01a8b4"/>
<rect x="736" y="650" width="49" height="25" fill="#01a7b4"/>
<rect x="784" y="650" width="49" height="25" fill="#00a6b5"/>
<rect x="832" y="650" width="25" height="25" fill="#00a5b5"/>
<rect x="856" y="650" width="25" height="25" fill="#00a4b5"/>
<rect x="880" y="650" width="25" height="25" fill="#00a2b5"/>
<rect x="904" y="650" width="25" height="25" fill="#00a0b5"/>
<rect x="928" y="650" width="25" height="25" fill="#009eb6"/>
<rect x="952" y="650" width="25" height="25" fill="#009bb6"/>
<rect x="976" y="650" width="25" height="25" fill="#0098b6"/>
<rect x="1000" y="650" width="25" height="25" fill="#0095b6"/>
<rect x="1024" y="650" width="25" height="25" fill="#0091b7"/>
<rect x="1048" y="650" width="25" height="25" fill="#008db7"/>
<rect x="1072" y="650" width="25" height="25" fill="#0088b8"/>
<rect x="1096" y="650" width="25" height="25" fill="#0084b8"/>
<rect x="1120" y="650" width="25" height="25" fill="#007fb8"/>
<rect x="1144" y="650" width="25" height="25" fill="#007bb8"/>
<rect x="1168" y="650" width="25" height="25" fill="#0076b8"/>
<rect x="1192" y="650" width="25" height="25" fill="#0071b8"/>
<rect x="1216" y="650" width="25" height="25" fill="#006cb8"/>
<rect x="1240" y="650" width="25" height="25" fill="#0066b7"/>
<rect x="1264" y="650" width="25" height="25" fill="#0060b7"/>
<rect x="1288" y="650" width="25" height="25" fill="#0059b7"/>
<rect x="1312" y="650" width="25" height="25" fill="#0052b7"/>
<rect x="1336" y="650" width="25" height="25" fill="#004bb7"/>
<rect x="520" y="674" width="25" height="25" fill="#02abb3"/>
<rect x="544" y="674" width="25" height="25" fill="#02aab3"/>
<rect x="568" y="674" width="25" height="25" fill="#01aab4"/>
<rect x="592" y="674" width="145" height="25" fill="#01a9b4"/>
<rect x="736" y="674" width="49" height="25" fill="#01a8b4"/>
<rect x="784" y="674" width="25" height="25" fill="#01a7b4"/>
<rect x="808" y="674" width="49" height="25" fill="#00a6b5"/>
<rect x="856" y="674" width="25" height="25" fill="#00a4b5"/>
<rect x="880" y="674" width="25" height="25" fill="#00a3b5"/>
<rect x="904" y="674" width="25" height="25" fill="#00a1b5"/>
<rect x="928" y="674" width="25" height="25" fill="#009fb6"/>
<rect x="952" y="674" width="25" height="25" fill="#009cb6"/>
<rect x="976" y="674" width="25" height="25" fill="#0099b6"/>
<rect x="1000" y="674" width="25" height="25" fill="#0096b6"/>
<rect x="1024" y="674" width="25" height="25" fill="#0093b7"/>
<rect x="1048" y="674" width="25" height="25" fill="#008fb7"/>
<rect x="1072" y="674" width="25" height="25" fill="#008bb7"/>
<rect x="1096" y="674" width="25" height="25" fill="#0086b8"/>
<rect x="1120" y="674" width="25" height="25" fill="#0082b8"/>
<rect x="1144" y="674" width="25" height="25" fill="#007eb8"/>
<rect x="1168" y="674" width="25" height="25" fill="#0079b8"/>
<rect x="1192" y="674" width="25" height="25" fill="#0074b8"/>
<rect x="1216" y="674" width="25" height="25" fill="#006fb8"/>
<rect x="1240" y="674" width="25" height="25" fill="#006ab8"/>
<rect x="1264" y="674" width="25" height="25" fill="#0064b7"/>
<rect x="1288" y="674" width="25" height="25" fill="#005eb7"/>
<rect x="1312" y="674" width="25" height="25" fill="#0057b7"/>
<rect x="1336" y="674" width="25" height="25" fill="#0050b7"/>
<rect x="520" y="698" width="25" height="25" fill="#02adb3"/>
<rect x="544" y="698" width="25" height="25" fill="#02acb3"/>
<rect x="568" y="698" width="97" height="25" fill="#02abb3"/>
<rect x="664" y="698" width="49" height="25" fill="#02aab3"/>
<rect x="712" y="698" width="25" height="25" fill="#01aab4"/>
<rect x="736" y="698" width="49" height="25" fill="#01a9b4"/>
<rect x="784" y="698" width="25" height="25" fill="#01a8b4"/>
<rect x="808" y="698" width="25" height="25" fill="#01a7b4"/>
<rect x="832" y="698" width="25" height="25" fill="#00a6b5"/>
<rect x="856" y="698" width="25" height="25" fill="#00a5b5"/>
<rect x="880" y="698" width="25" height="25" fill="#00a3b5"/>
<rect x="904" y="698" width="25" height="25" fill="#00a2b5"/>
<rect x="928" y="698" width="25" height="25" fill="#00a0b5"/>
<rect x="952" y="698" width="25" height="25" fill="#009db6"/>
<rect x="976" y="698" width="25" height="25" fill="#009bb6"/>
<rect x="1000" y="698" width="25" height="25" fill="#0098b6"/>
<rect x="1024" y="698" width="25" height="25" fill="#0094b7"/>
<rect x="1048" y="698" width="25" height="25" fill="#0091b7"/>
<rect x="1072" y="698" width="25" height="25" fill="#008db7"/>
<rect x="1096" y="698" width="25" height="25" fill="#0089b8"/>
<rect x="1120" y="698" width="25" height="25" fill="#0085b8"/>
<rect x="1144" y="698" width="25" height="25" fill="#0080b8"/>
<rect x="1168" y="698" width="25" height="25" fill="#007cb8"/>
<rect x="1192" y="698" width="25" height="25" fill="#0077b8"/>
<rect x="1216" y="698" width="25" height="25" fill="#0073b8"/>
<rect x="1240" y="698" width="25" height="25" fill="#006db8"/>
<rect x="1264" y="698" width="25" height="25" fill="#0068b7"/>
<rect x="1288" y="698" width="25" height="25" fill="#0061b7"/>
<rect x="1312" y="698" width="25" height="25" fill="#005bb7"/>
<rect x="1336" y="698" width="25" height="25" fill="#0054b7"/>
<rect x="520" y="722" width="25" height="25" fill="#03afb2"/>
<rect x="544" y="722" width="25" height="25" fill="#03aeb2"/>
<rect x="568" y="722" width="25" height="25" fill="#03adb2"/>
<rect x="592" y="722" width="25" height="25" fill="#02adb3"/>
<rect x="616" y="722" width="73" height="25" fill="#02acb3"/>
<rect x="688" y="722" width="49" height="25" fill="#02abb3"/>
<rect x="736" y="722" width="25" height="25" fill="#02aab3"/>
<rect x="760" y="722" width="49" height="25" fill="#01a9b4"/>
<rect x="808" y="722" width="25" height="25" fill="#01a8b4"/>
<rect x="832" y="722" width="25" height="25" fill="#01a7b4"/>
<rect x="856" y="722" width="25" height="25" fill="#00a6b5"/>
<rect x="880" y="722" width="25" height="25" fill="#00a4b5"/>
<rect x="904" y="722" width="25" height="25" fill="#00a3b5"/>
<rect x="928" y="722" width="25" height="25" fill="#00a1b5"/>
<rect x="952" y="722" width="25" height="25" fill="#009eb6"/>
<rect x="976" y="722" width="25" height="25" fill="#009cb6"/>
<rect x="1000" y="722" width="25" height="25" fill="#0099b6"/>
<rect x="1024" y="722" width="25" height="25" fill="#0096b6"/>
<rect x="1048" y="722" width="25" height="25" fill="#0093b7"/>
<rect x="1072" y="722" width="25" height="25" fill="#008fb7"/>
<rect x="1096" y="722" width="25" height="25" fill="#008bb7"/>
<rect x="1120" y="722" width="25" height="25" fill="#0087b8"/>
<rect x="1144" y="722" width="25" height="25" fill="#0083b8"/>
<rect x="1168" y="722" width="25" height="25" fill="#007eb8"/>
<rect x="1192" y="722" width="25" height="25" fill="#007ab8"/>
<rect x="1216" y="722" width="25" height="25" fill="#0075b8"/>
<rect x="1240" y="722" width="25" height="25" fill="#0070b8"/>
<rect x="1264" y="722" width="25" height="25" fill="#006bb8"/>
<rect x="1288" y="722" width="25" height="25" fill="#0065b7"/>
<rect x="1312" y="722" width="25" height="25" fill="#005eb7"/>
<rect x="1336" y="722" width="25" height="25" fill="#0057b7"/>
<rect x="520" y="746" width="25" height="25" fill="#04b1b1"/>
<rect x="544" y="746" width="25" height="25" fill="#03b0b2"/>
<rect x="568" y="746" width="49" height="25" fill="#03afb2"/>
<rect x="616" y="746" width="25" height="25" fill="#03aeb2"/>
<rect x="640" y="746" width="25" height="25" fill="#03adb2"/>
<rect x="664" y="746" width="25" height="25" fill="#02adb3"/>
<rect x="688" y="746" width="49" height="25" fill="#02acb3"/>
<rect x="736" y="746" width="25" height="25" fill="#02abb3"/>
<rect x="760" y="746" width="25" height="25" fill="#02aab3"/>
<rect x="784" y="746" width="49" height="25" fill="#01a9b4"/>
<rect x="832" y="746" width="25" height="25" fill="#01a7b4"/>
<rect x="856" y="746" width="25" height="25" fill="#00a6b5"/>
<rect x="880" y="746" width="25" height="25" fill="#00a5b5"/>
<rect x="904" y="746" width="25" height="25" fill="#00a3b5"/>
<rect x="928" y="746" width="25" height="25" fill="#00a2b5"/>
<rect x="952" y="746" width="25" height="25" fill="#00a0b5"/>
<rect x="976" y="746" width="25" height="25" fill="#009db6"/>
<rect x="1000" y="746" width="25" height="25" fill="#009bb6"/>
<rect x="1024" y="746" width="25" height="25" fill="#0098b6"/>
<rect x="1048" y="746" width="25" height="25" fill="#0095b6"/>
<rect x="1072" y="746" width="25" height="25" fill="#0091b7"/>
<rect x="1096" y="746" width="25" height="25" fill="#008db7"/>
<rect x="1120" y="746" width="25" height="25" fill="#0089b8"/>
<rect x="1144" y="746" width="25" height="25" fill="#0085b8"/>
<rect x="1168" y="746" width="25" height="25" fill="#0081b8"/>
<rect x="1192" y="746" width="25" height="25" fill="#007cb8"/>
<rect x="1216" y="746" width="25" height="25" fill="#0077b8"/>
<rect x="1240" y="746" width="25" height="25" fill="#0072b8"/>
<rect x="1264" y="746" width="25" height="25" fill="#006db8"/>
<rect x="1288" y="746" width="25" height="25" fill="#0067b7"/>
<rect x="1312" y="746" width="25" height="25" fill="#0061b7"/>
<rect x="1336" y="746" width="25" height="25" fill="#005bb7"/>
<rect x="520" y="770" width="25" height="25" fill="#05b3b0"/>
<rect x="544" y="770" width="25" height="25" fill="#04b2b1"/>
<rect x="568" y="770" width="25" height="25" fill="#04b1b1"/>
<rect x="592" y="770" width="49" height="25" fill="#03b0b2"/>
<rect x="640" y="770" width="25" height="25" fill="#03afb2"/>
<rect x="664" y="770" width="49" height="25" fill="#03aeb2"/>
<rect x="712" y="770" width="25" height="25" fill="#02adb3"/>
<rect x="736" y="770" width="25" height="25" fill="#02acb3"/>
<rect x="760" y="770" width="25" height="25" fill="#02abb3"/>
<rect x="784" y="770" width="25" height="25" fill="#02aab3"/>
<rect x="808" y="770" width="25" height="25" fill="#01a9b4"/>
<rect x="832" y="770" width="25" height="25" fill="#01a8b4"/>
<rect x="856" y="770" width="25" height="25" fill="#01a7b4"/>
<rect x="880" y="770" width="25" height="25" fill="#00a6b5"/>
<rect x="904" y="770" width="25" height="25" fill="#00a4b5"/>
<rect x="928" y="770" width="25" height="25" fill="#00a3b5"/>
<rect x="952" y="770" width="25" height="25" fill="#00a1b5"/>
<rect x="976" y="770" width="25" height="25" fill="#009fb6"/>
<rect x="1000" y="770" width="25" height="25" fill="#009db6"/>
<rect x="1024" y="770" width="25" height="25" fill="#009ab6"/>
<rect x="1048" y="770" width="25" height="25" fill="#0096b6"/>
<rect x="1072" y="770" width="25" height="25" fill="#0093b7"/>
<rect x="1096" y="770" width="25" height="25" fill="#008fb7"/>
<rect x="1120" y="770" width="25" height="25" fill="#008bb7"/>
<rect x="1144" y="770" width="25" height="25" fill="#0087b8"/>
<rect x="1168" y="770" width="25" height="25" fill="#0083b8"/>
<rect x="1192" y="770" width="25" height="25" fill="#007eb8"/>
<rect x="1216" y="770" width="25" height="25" fill="#007ab8"/>
<rect x="1240" y="770" width="25" height="25" fill="#0075b8"/>
<rect x="1264" y="770" width="25" height="25" fill="#006fb8"/>
<rect x="1288" y="770" width="25" height="25" fill="#006ab7"/>
<rect x="1312" y="770" width="25" height="25" fill="#0064b7"/>
<rect x="1336" y="770" width="25" height="25" fill="#005db7"/>
<rect x="520" y="794" width="25" height="25" fill="#06b4ae"/>
<rect x="544" y="794" width="25" height="25" fill="#05b4af"/>
<rect x="568" y="794" width="25" height="25" fill="#05b3b0"/>
<rect x="592" y="794" width="25" height="25" fill="#04b2b1"/>
<rect x="616" y="794" width="49" height="25" fill="#04b1b1"/>
<rect x="664" y="794" width="25" height="25" fill="#03b0b2"/>
<rect x="688" y="794" width="25" height="25" fill="#03afb2"/>
<rect x="712" y="794" width="25" height="25" fill="#03aeb2"/>
<rect x="736" y="794" width="25" height="25" fill="#03adb2"/>
<rect x="760" y="794" width="25" height="25" fill="#02acb3"/>
<rect x="784" y="794" width="25" height="25" fill="#02abb3"/>
<rect x="808" y="794" width="25" height="25" fill="#02aab3"/>
<rect x="832" y="794" width="25" height="25" fill="#01a9b4"/>
<rect x="856" y="794" width="25" height="25" fill="#01a8b4"/>
<rect x="880" y="794" width="25" height="25" fill="#00a7b5"/>
<rect x="904" y="794" width="25" height="25" fill="#00a5b5"/>
<rect x="928" y="794" width="25" height="25" fill="#00a4b5"/>
<rect x="952" y="794" width="25" height="25" fill="#00a2b5"/>
<rect x="976" y="794" width="25" height="25" fill="#00a0b5"/>
<rect x="1000" y="794" width="25" height="25" fill="#009eb6"/>
<rect x="1024" y="794" width="25" height="25" fill="#009bb6"/>
<rect x="1048" y="794" width="25" height="25" fill="#0098b6"/>
<rect x="1072" y="794" width="25" height="25" fill="#0095b6"/>
<rect x="1096" y="794" width="25" height="25" fill="#0091b7"/>
<rect x="1120" y="794" width="25" height="25" fill="#008db7"/>
<rect x="1144" y="794" width="25" height="25" fill="#0089b8"/>
<rect x="1168" y="794" width="25" height="25" fill="#0085b8"/>
<rect x="1192" y="794" width="25" height="25" fill="#0080b8"/>
<rect x="1216" y="794" width="25" height="25" fill="#007bb8"/>
<rect x="1240" y="794" width="25" height="25" fill="#0076b8"/>
<rect x="1264" y="794" width="25" height="25" fill="#0071b8"/>
<rect x="1288" y="794" width="25" height="25" fill="#006cb8"/>
<rect x="1312" y="794" width="25" height="25" fill="#0066b7"/>
<rect x="1336" y="794" width="25" height="25" fill="#0060b7"/>
<rect x="520" y="818" width="25" height="25" fill="#07b6ad"/>
<rect x="544" y="818" width="25" height="25" fill="#06b5ae"/>
<rect x="568" y="818" width="25" height="25" fill="#06b4af"/>
<rect x="592" y="818" width="25" height="25" fill="#05b3af"/>
<rect x="616" y="818" width="25" height="25" fill="#05b3b0"/>
<rect x="640" y="818" width="25" height="25" fill="#04b2b1"/>
<rect x="664" y="818" width="25" height="25" fill="#04b1b1"/>
<rect x="688" y="818" width="25" height="25" fill="#04b0b1"/>
<rect x="712" y="818" width="25" height="25" fill="#03afb2"/>
<rect x="736" y="818" width="25" height="25" fill="#03aeb2"/>
<rect x="760" y="818" width="25" height="25" fill="#03adb2"/>
<rect x="784" y="818" width="25" height="25" fill="#02acb3"/>
<rect x="808" y="818" width="25" height="25" fill="#02abb3"/>
<rect x="832" y="818" width="25" height="25" fill="#01aab4"/>
<rect x="856" y="818" width="25" height="25" fill="#01a9b4"/>
<rect x="880" y="818" width="25" height="25" fill="#01a7b4"/>
<rect x="904" y="818" width="25" height="25" fill="#00a6b5"/>
<rect x="928" y="818" width="25" height="25" fill="#00a5b5"/>
<rect x="952" y="818" width="25" height="25" fill="#00a4b5"/>
<rect x="976" y="818" width="25" height="25" fill="#00a2b5"/>
<rect x="1000" y="818" width="25" height="25" fill="#00a0b5"/>
<rect x="1024" y="818" width="25" height="25" fill="#009db6"/>
<rect x="1048" y="818" width="25" height="25" fill="#009ab6"/>
<rect x="1072" y="818" width="25" height="25" fill="#0096b6"/>
<rect x="1096" y="818" width="25" height="25" fill="#0093b7"/>
<rect x="1120" y="818" width="25" height="25" fill="#008fb7"/>
<rect x="1144" y="818" width="25" height="25" fill="#008bb7"/>
<rect x="1168" y="818" width="25" height="25" fill="#0086b8"/>
<rect x="1192" y="818" width="25" height="25" fill="#0082b8"/>
<rect x="1216" y="818" width="25" height="25" fill="#007db8"/>
<rect x="1240" y="818" width="25" height="25" fill="#0078b8"/>
<rect x="1264" y="818" width="25" height="25" fill="#0073b8"/>
<rect x="1288" y="818" width="25" height="25" fill="#006eb8"/>
<rect x="1312" y="818" width="25" height="25" fill="#0068b7"/>
<rect x="1336" y="818" width="25" height="25" fill="#0062b7"/>
<rect x="520" y="842" width="25" height="25" fill="#08b7ab"/>
<rect x="544" y="842" width="25" height="25" fill="#07b7ac"/>
<rect x="568" y="842" width="25" height="25" fill="#07b6ad"/>
<rect x="592" y="842" width="25" height="25" fill="#06b5ae"/>
<rect x="616" y="842" width="25" height="25" fill="#06b4af"/>
<rect x="640" y="842" width="25" height="25" fill="#05b3af"/>
<rect x="664" y="842" width="25" height="25" fill="#05b3b0"/>
<rect x="688" y="842" width="25" height="25" fill="#04b2b1"/>
<rect x="712" y="842" width="25" height="25" fill="#04b1b1"/>
<rect x="736" y="842" width="25" height="25" fill="#03b0b2"/>
<rect x="760" y="842" width="25" height="25" fill="#03aeb2"/>
<rect x="784" y="842" width="25" height="25" fill="#03adb2"/>
<rect x="808" y="842" width="25" height="25" fill="#02acb3"/>
<rect x="832" y="842" width="25" height="25" fill="#02abb3"/>
<rect x="856" y="842" width="25" height="25" fill="#01a9b4"/>
<rect x="880" y="842" width="25" height="25" fill="#01a8b4"/>
<rect x="904" y="842" width="25" height="25" fill="#01a7b4"/>
<rect x="928" y="842" width="25" height="25" fill="#00a6b5"/>
<rect x="952" y="842" width="25" height="25" fill="#00a5b5"/>
<rect x="976" y="842" width="25" height="25" fill="#00a3b5"/>
<rect x="1000" y="842" width="25" height="25" fill="#00a1b5"/>
<rect x="1024" y="842" width="25" height="25" fill="#009eb6"/>
<rect x="1048" y="842" width="25" height="25" fill="#009bb6"/>
<rect x="1072" y="842" width="25" height="25" fill="#0098b6"/>
<rect x="1096" y="842" width="25" height="25" fill="#0094b7"/>
<rect x="1120" y="842" width="25" height="25" fill="#0090b7"/>
<rect x="1144" y="842" width="25" height="25" fill="#008cb7"/>
<rect x="1168" y="842" width="25" height="25" fill="#0088b8"/>
<rect x="1192" y="842" width="25" height="25" fill="#0084b8"/>
<rect x="1216" y="842" width="25" height="25" fill="#007fb8"/>
<rect x="1240" y="842" width="25" height="25" fill="#007ab8"/>
<rect x="1264" y="842" width="25" height="25" fill="#0075b8"/>
<rect x="1288" y="842" width="25" height="25" fill="#006fb8"/>
<rect x="1312" y="842" width="25" height="25" fill="#006ab7"/>
<rect x="1336" y="842" width="25" height="25" fill="#0064b7"/>
<rect x="520" y="866" width="25" height="25" fill="#09b9a9"/>
<rect x="544" y="866" width="25" height="25" fill="#09b8aa"/>
<rect x="568" y="866" width="25" height="25" fill="#08b7ab"/>
<rect x="592" y="866" width="25" height="25" fill="#07b6ac"/>
<rect x="616" y="866" width="25" height="25" fill="#07b5ad"/>
<rect x="640" y="866" width="25" height="25" fill="#06b5ae"/>
<rect x="664" y="866" width="25" height="25" fill="#05b4af"/>
<rect x="688" y="866" width="25" height="25" fill="#05b3b0"/>
<rect x="712" y="866" width="25" height="25" fill="#04b2b1"/>
<rect x="736" y="866" width="25" height="25" fill="#04b1b1"/>
<rect x="760" y="866" width="25" height="25" fill="#03b0b2"/>
<rect x="784" y="866" width="25" height="25" fill="#03aeb2"/>
<rect x="808" y="866" width="25" height="25" fill="#02adb3"/>
<rect x="832" y="866" width="25" height="25" fill="#02acb3"/>
<rect x="856" y="866" width="25" height="25" fill="#02abb3"/>
<rect x="880" y="866" width="25" height="25" fill="#01a9b4"/>
<rect x="904" y="866" width="25" height="25" fill="#01a8b4"/>
<rect x="928" y="866" width="25" height="25" fill="#01a7b4"/>
<rect x="952" y="866" width="25" height="25" fill="#00a6b5"/>
<rect x="976" y="866" width="25" height="25" fill="#00a4b5"/>
<rect x="1000" y="866" width="25" height="25" fill="#00a2b5"/>
<rect x="1024" y="866" width="25" height="25" fill="#009fb6"/>
<rect x="1048" y="866" width="25" height="25" fill="#009db6"/>
<rect x="1072" y="866" width="25" height="25" fill="#0099b6"/>
<rect x="1096" y="866" width="25" height="25" fill="#0096b6"/>
<rect x="1120" y="866" width="25" height="25" fill="#0092b7"/>
<rect x="1144" y="866" width="25" height="25" fill="#008eb7"/>
<rect x="1168" y="866" width="25" height="25" fill="#008ab7"/>
<rect x="1192" y="866" width="25" height="25" fill="#0085b8"/>
<rect x="1216" y="866" width="25" height="25" fill="#0080b8"/>
<rect x="1240" y="866" width="25" height="25" fill="#007cb8"/>
<rect x="1264" y="866" width="25" height="25" fill="#0076b8"/>
<rect x="1288" y="866" width="25" height="25" fill="#0071b8"/>
<rect x="1312" y="866" width="25" height="25" fill="#006bb8"/>
<rect x="1336" y="866" width="25" height="25" fill="#0066b7"/>
<rect x="520" y="890" width="49" height="25" fill="#0abaa8"/>
<rect x="568" y="890" width="25" height="25" fill="#09b9aa"/>
<rect x="592" y="890" width="25" height="25" fill="#08b8ab"/>
<rect x="616" y="890" width="25" height="25" fill="#08b7ac"/>
<rect x="640" y="890" width="25" height="25" fill="#07b6ad"/>
<rect x="664" y="890" width="25" height="25" fill="#06b5ae"/>
<rect x="688" y="890" width="25" height="25" fill="#06b4af"/>
<rect x="712" y="890" width="25" height="25" fill="#05b3b0"/>
<rect x="736" y="890" width="25" height="25" fill="#04b2b1"/>
<rect x="760" y="890" width="25" height="25" fill="#04b1b1"/>
<rect x="784" y="890" width="25" height="25" fill="#03b0b2"/>
<rect x="808" y="890" width="25" height="25" fill="#03aeb2"/>
<rect x="832" y="890" width="25" height="25" fill="#03adb2"/>
<rect x="856" y="890" width="25" height="25" fill="#02acb3"/>
<rect x="880" y="890" width="25" height="25" fill="#02abb3"/>
<rect x="904" y="890" width="25" height="25" fill="#01a9b4"/>
<rect x="928" y="890" width="25" height="25" fill="#01a8b4"/>
<rect x="952" y="890" width="25" height="25" fill="#01a7b4"/>
<rect x="976" y="890" width="25" height="25" fill="#00a5b5"/>
<rect x="1000" y="890" width="25" height="25" fill="#00a3b5"/>
<rect x="1024" y="890" width="25" height="25" fill="#00a0b5"/>
<rect x="1048" y="890" width="25" height="25" fill="#009eb6"/>
<rect x="1072" y="890" width="25" height="25" fill="#009ab6"/>
<rect x="1096" y="890" width="25" height="25" fill="#0097b6"/>
<rect x="1120" y="890" width="25" height="25" fill="#0093b7"/>
<rect x="1144" y="890" width="25" height="25" fill="#008fb7"/>
<rect x="1168" y="890" width="25" height="25" fill="#008bb7"/>
<rect x="1192" y="890" width="25" height="25" fill="#0086b8"/>
<rect x="1216" y="890" width="25" height="25" fill="#0082b8"/>
<rect x="1240" y="890" width="25" height="25" fill="#007db8"/>
<rect x="1264" y="890" width="25" height="25" fill="#0078b8"/>
<rect x="1288" y="890" width="25" height="25" fill="#0072b8"/>
<rect x="1312" y="890" width="25" height="25" fill="#006db8"/>
<rect x="1336" y="890" width="25" height="25" fill="#0067b7"/>
<rect x="520" y="914" width="73" height="25" fill="#0abaa8"/>
<rect x="592" y="914" width="25" height="25" fill="#09b9a9"/>
<rect x="616" y="914" width="25" height="25" fill="#09b8aa"/>
<rect x="640" y="914" width="25" height="25" fill="#08b7ab"/>
<rect x="664" y="914" width="25" height="25" fill="#07b6ac"/>
<rect x="688" y="914" width="25" height="25" fill="#07b5ad"/>
<rect x="712" y="914" width="25" height="25" fill="#06b4ae"/>
<rect x="736" y="914" width="25" height="25" fill="#05b4af"/>
<rect x="760" y="914" width="25" height="25" fill="#04b3b0"/>
<rect x="784" y="914" width="25" height="25" fill="#04b1b1"/>
<rect x="808" y="914" width="25" height="25" fill="#03b0b2"/>
<rect x="832" y="914" width="25" height="25" fill="#03afb2"/>
<rect x="856" y="914" width="25" height="25" fill="#03adb2"/>
<rect x="880" y="914" width="25" height="25" fill="#02acb3"/>
<rect x="904" y="914" width="25" height="25" fill="#02abb3"/>
<rect x="928" y="914" width="25" height="25" fill="#01a9b4"/>
<rect x="952" y="914" width="25" height="25" fill="#01a8b4"/>
<rect x="976" y="914" width="25" height="25" fill="#00a6b5"/>
<rect x="1000" y="914" width="25" height="25" fill="#00a4b5"/>
<rect x="1024" y="914" width="25" height="25" fill="#00a1b5"/>
<rect x="1048" y="914" width="25" height="25" fill="#009fb6"/>
<rect x="1072" y="914" width="25" height="25" fill="#009cb6"/>
<rect x="1096" y="914" width="25" height="25" fill="#0098b6"/>
<rect x="1120" y="914" width="25" height="25" fill="#0094b7"/>
<rect x="1144" y="914" width="25" height="25" fill="#0090b7"/>
<rect x="1168" y="914" width="25" height="25" fill="#008cb7"/>
<rect x="1192" y="914" width="25" height="25" fill="#0088b8"/>
<rect x="1216" y="914" width="25" height="25" fill="#0083b8"/>
<rect x="1240" y="914" width="25" height="25" fill="#007eb8"/>
<rect x="1264" y="914" width="25" height="25" fill="#0079b8"/>
<rect x="1288" y="914" width="25" height="25" fill="#0074b8"/>
<rect x="1312" y="914" width="25" height="25" fill="#006eb8"/>
<rect x="1336" y="914" width="25" height="25" fill="#0069b7"/>
<rect x="520" y="938" width="121" height="25" fill="#0abaa8"/>
<rect x="640" y="938" width="25" height="25" fill="#09b9a9"/>
<rect x="664" y="938" width="25" height="25" fill="#08b8ab"/>
<rect x="688" y="938" width="25" height="25" fill="#08b7ac"/>
<rect x="712" y="938" width="25" height="25" fill="#07b6ad"/>
<rect x="736" y="938" width="25" height="25" fill="#06b5ae"/>
<rect x="760" y="938" width="25" height="25" fill="#05b4af"/>
<rect x="784" y="938" width="25" height="25" fill="#05b3b0"/>
<rect x="808" y="938" width="25" height="25" fill="#04b2b1"/>
<rect x="832" y="938" width="25" height="25" fill="#03b0b2"/>
<rect x="856" y="938" width="25" height="25" fill="#03afb2"/>
<rect x="880" y="938" width="25" height="25" fill="#03aeb2"/>
<rect x="904" y="938" width="25" height="25" fill="#02acb3"/>
<rect x="928" y="938" width="25" height="25" fill="#02abb3"/>
<rect x="952" y="938" width="25" height="25" fill="#01a9b4"/>
<rect x="976" y="938" width="25" height="25" fill="#01a7b4"/>
<rect x="1000" y="938" width="25" height="25" fill="#00a5b5"/>
<rect x="1024" y="938" width="25" height="25" fill="#00a2b5"/>
<rect x="1048" y="938" width="25" height="25" fill="#00a0b5"/>
<rect x="1072" y="938" width="25" height="25" fill="#009db6"/>
<rect x="1096" y="938" width="25" height="25" fill="#0099b6"/>
<rect x="1120" y="938" width="25" height="25" fill="#0096b6"/>
<rect x="1144" y="938" width="25" height="25" fill="#0092b7"/>
<rect x="1168" y="938" width="25" height="25" fill="#008db7"/>
<rect x="1192" y="938" width="25" height="25" fill="#0089b8"/>
<rect x="1216" y="938" width="25" height="25" fill="#0084b8"/>
<rect x="1240" y="938" width="25" height="25" fill="#007fb8"/>
<rect x="1264" y="938" width="25" height="25" fill="#007ab8"/>
<rect x="1288" y="938" width="25" height="25" fill="#0075b8"/>
<rect x="1312" y="938" width="25" height="25" fill="#0070b8"/>
<rect x="1336" y="938" width="25" height="25" fill="#006bb8"/>
<rect x="520" y="962" width="145" height="25" fill="#0abaa8"/>
<rect x="664" y="962" width="25" height="25" fill="#09b9a9"/>
<rect x="688" y="962" width="25" height="25" fill="#09b8aa"/>
<rect x="712" y="962" width="25" height="25" fill="#08b7ab"/>
<rect x="736" y="962" width="25" height="25" fill="#07b6ac"/>
<rect x="760" y="962" width="25" height="25" fill="#06b5ae"/>
<rect x="784" y="962" width="25" height="25" fill="#06b4af"/>
<rect x="808" y="962" width="25" height="25" fill="#05b3b0"/>
<rect x="832" y="962" width="25" height="25" fill="#04b2b1"/>
<rect x="856" y="962" width="25" height="25" fill="#04b1b1"/>
<rect x="880" y="962" width="25" height="25" fill="#03afb2"/>
<rect x="904" y="962" width="25" height="25" fill="#03adb2"/>
<rect x="928" y="962" width="25" height="25" fill="#02acb3"/>
<rect x="952" y="962" width="25" height="25" fill="#02aab3"/>
<rect x="976" y="962" width="25" height="25" fill="#01a8b4"/>
<rect x="1000" y="962" width="25" height="25" fill="#00a6b5"/>
<rect x="1024" y="962" width="25" height="25" fill="#00a3b5"/>
<rect x="1048" y="962" width="25" height="25" fill="#00a1b5"/>
<rect x="1072" y="962" width="25" height="25" fill="#009eb6"/>
<rect x="1096" y="962" width="25" height="25" fill="#009ab6"/>
<rect x="1120" y="962" width="25" height="25" fill="#0097b6"/>
<rect x="1144" y="962" width="25" height="25" fill="#0093b7"/>
<rect x="1168" y="962" width="25" height="25" fill="#008eb7"/>
<rect x="1192" y="962" width="25" height="25" fill="#008ab7"/>
<rect x="1216" y="962" width="25" height="25" fill="#0085b8"/>
<rect x="1240" y="962" width="25" height="25" fill="#0080b8"/>
<rect x="1264" y="962" width="25" height="25" fill="#007bb8"/>
<rect x="1288" y="962" width="25" height="25" fill="#0076b8"/>
<rect x="1312" y="962" width="25" height="25" fill="#0071b8"/>
<rect x="1336" y="962" width="25" height="25" fill="#006cb8"/>
<rect x="520" y="986" width="169" height="25" fill="#0abaa8"/>
<rect x="688" y="986" width="25" height="25" fill="#0ab9a9"/>
<rect x="712" y="986" width="25" height="25" fill="#09b8aa"/>
<rect x="736" y="986" width="25" height="25" fill="#08b7ab"/>
<rect x="760" y="986" width="25" height="25" fill="#07b6ac"/>
<rect x="784" y="986" width="25" height="25" fill="#06b5ad"/>
<rect x="808" y="986" width="25" height="25" fill="#06b4af"/>
<rect x="832" y="986" width="25" height="25" fill="#05b3b0"/>
<rect x="856" y="986" width="25" height="25" fill="#04b2b1"/>
<rect x="880" y="986" width="25" height="25" fill="#04b1b1"/>
<rect x="904" y="986" width="25" height="25" fill="#03afb2"/>
<rect x="928" y="986" width="25" height="25" fill="#03adb2"/>
<rect x="952" y="986" width="25" height="25" fill="#02abb3"/>
<rect x="976" y="986" width="25" height="25" fill="#01a9b4"/>
<rect x="1000" y="986" width="25" height="25" fill="#01a7b4"/>
<rect x="1024" y="986" width="25" height="25" fill="#00a4b5"/>
<rect x="1048" y="986" width="25" height="25" fill="#00a2b5"/>
<rect x="1072" y="986" width="25" height="25" fill="#009fb6"/>
<rect x="1096" y="986" width="25" height="25" fill="#009bb6"/>
<rect x="1120" y="986" width="25" height="25" fill="#0098b6"/>
<rect x="1144" y="986" width="25" height="25" fill="#0094b7"/>
<rect x="1168" y="986" width="25" height="25" fill="#0090b7"/>
<rect x="1192" y="986" width="25" height="25" fill="#008bb7"/>
<rect x="1216" y="986" width="25" height="25" fill="#0087b8"/>
<rect x="1240" y="986" width="25" height="25" fill="#0082b8"/>
<rect x="1264" y="986" width="25" height="25" fill="#007db8"/>
<rect x="1288" y="986" width="25" height="25" fill="#0078b8"/>
<rect x="1312" y="986" width="25" height="25" fill="#0073b8"/>
<rect x="1336" y="986" width="25" height="25" fill="#006eb8"/>
<rect x="520" y="1010" width="217" height="25" fill="#0abaa8"/>
<rect x="736" y="1010" width="25" height="25" fill="#09b9a9"/>
<rect x="760" y="1010" width="25" height="25" fill="#08b8ab"/>
<rect x="784" y="1010" width="25" height="25" fill="#07b7ac"/>
<rect x="808" y="1010" width="25" height="25" fill="#07b5ad"/>
<rect x="832" y="1010" width="25" height="25" fill="#06b4ae"/>
<rect x="856" y="1010" width="25" height="25" fill="#05b3b0"/>
<rect x="880" y="1010" width="25" height="25" fill="#04b2b1"/>
<rect x="904" y="1010" width="25" height="25" fill="#04b0b1"/>
<rect x="928" y="1010" width="25" height="25" fill="#03afb2"/>
<rect x="952" y="1010" width="25" height="25" fill="#02adb3"/>
<rect x="976" y="1010" width="25" height="25" fill="#02aab3"/>
<rect x="1000" y="1010" width="25" height="25" fill="#01a8b4"/>
<rect x="1024" y="1010" width="25" height="25" fill="#00a6b5"/>
<rect x="1048" y="1010" width="25" height="25" fill="#00a3b5"/>
<rect x="1072" y="1010" width="25" height="25" fill="#00a0b5"/>
<rect x="1096" y="1010" width="25" height="25" fill="#009cb6"/>
<rect x="1120" y="1010" width="25" height="25" fill="#0099b6"/>
<rect x="1144" y="1010" width="25" height="25" fill="#0095b6"/>
<rect x="1168" y="1010" width="25" height="25" fill="#0091b7"/>
<rect x="1192" y="1010" width="25" height="25" fill="#008cb7"/>
<rect x="1216" y="1010" width="25" height="25" fill="#0088b8"/>
<rect x="1240" y="1010" width="25" height="25" fill="#0083b8"/>
<rect x="1264" y="1010" width="25" height="25" fill="#007fb8"/>
<rect x="1288" y="1010" width="25" height="25" fill="#007ab8"/>
<rect x="1312" y="1010" width="25" height="25" fill="#0075b8"/>
<rect x="1336" y="1010" width="25" height="25" fill="#0070b8"/>
<rect x="520" y="1034" width="241" height="25" fill="#0abaa8"/>
<rect x="760" y="1034" width="25" height="25" fill="#09b9a9"/>
<rect x="784" y="1034" width="25" height="25" fill="#08b8aa"/>
<rect x="808" y="1034" width="25" height="25" fill="#08b7ac"/>
<rect x="832" y="1034" width="25" height="25" fill="#07b6ad"/>
<rect x="856" y="1034" width="25" height="25" fill="#06b4ae"/>
<rect x="880" y="1034" width="25" height="25" fill="#05b3b0"/>
<rect x="904" y="1034" width="25" height="25" fill="#04b2b1"/>
<rect x="928" y="1034" width="25" height="25" fill="#03b0b2"/>
<rect x="952" y="1034" width="25" height="25" fill="#03aeb2"/>
<rect x="976" y="1034" width="25" height="25" fill="#02acb3"/>
<rect x="1000" y="1034" width="25" height="25" fill="#01a9b4"/>
<rect x="1024" y="1034" width="25" height="25" fill="#01a7b4"/>
<rect x="1048" y="1034" width="25" height="25" fill="#00a4b5"/>
<rect x="1072" y="1034" width="25" height="25" fill="#00a1b5"/>
<rect x="1096" y="1034" width="25" height="25" fill="#009db6"/>
<rect x="1120" y="1034" width="25" height="25" fill="#009ab6"/>
<rect x="1144" y="1034" width="25" height="25" fill="#0096b6"/>
<rect x="1168" y="1034" width="25" height="25" fill="#0092b7"/>
<rect x="1192" y="1034" width="25" height="25" fill="#008eb7"/>
<rect x="1216" y="1034" width="25" height="25" fill="#0089b8"/>
<rect x="1240" y="1034" width="25" height="25" fill="#0085b8"/>
<rect x="1264" y="1034" width="25" height="25" fill="#0080b8"/>
<rect x="1288" y="1034" width="25" height="25" fill="#007bb8"/>
<rect x="1312" y="1034" width="25" height="25" fill="#0077b8"/>
<rect x="1336" y="1034" width="25" height="25" fill="#0072b8"/>
</g>
<rect x="520" y="80" width="820" height="940" fill="url(#vstripe)" mask="url(#vsmask)"/>
<rect x="520" y="80" width="820" height="940" fill="url(#rings)" mask="url(#rmask)"/>
<path d="M819,100 C817,170 812,230 798,290 S760,360 740,390" stroke="#48d0e0" stroke-opacity=".3" stroke-width="17" fill="none" filter="url(#blur6)" shape-rendering="auto"/>
<!-- small dark features -->
<g fill="#0418b0" shape-rendering="auto"><ellipse cx="1286" cy="708" rx="3.2" ry="5.500" fill="#0820c8"/><rect x="1102" y="892" width="12" height="3" rx="1.500" fill="#0a58c0" opacity=".8"/></g>
<g fill="#0a1aa8">
<rect x="1290" y="603" width="2" height="3"/><rect x="1291" y="630" width="2" height="2"/><rect x="1291" y="637" width="2" height="4"/><rect x="1292" y="653" width="2" height="3"/><rect x="1292" y="660" width="2" height="2"/><rect x="1293" y="676" width="2" height="2"/><rect x="1293" y="683" width="2" height="3"/><rect x="1294" y="705" width="2" height="2"/><rect x="1284" y="300" width="2" height="3"/><rect x="1286" y="420" width="2" height="3"/><rect x="1288" y="505" width="2" height="2"/>
<rect x="1297" y="790" width="2" height="3"/><rect x="1299" y="840" width="2" height="2"/><rect x="1301" y="905" width="2" height="4"/><rect x="1300" y="918" width="3" height="2"/>
<rect x="556" y="383" width="2" height="3"/><rect x="557" y="405" width="2" height="8"/><rect x="559" y="450" width="2" height="3"/><rect x="560" y="468" width="2" height="2"/><rect x="563" y="532" width="2" height="4"/><rect x="564" y="548" width="2" height="9"/><rect x="566" y="600" width="2" height="5"/><rect x="567" y="620" width="2" height="3"/><rect x="568" y="672" width="2" height="6"/><rect x="569" y="700" width="2" height="3"/><rect x="570" y="724" width="2" height="2"/><rect x="574" y="741" width="2" height="2"/>
<rect x="627" y="213" width="3" height="2"/><rect x="639" y="172" width="2" height="3"/><rect x="594" y="244" width="2" height="2"/><rect x="583" y="258" width="3" height="2"/><rect x="570" y="270" width="2" height="4"/><rect x="562" y="290" width="2" height="2"/>
<rect x="747" y="115" width="2" height="2"/><rect x="817" y="112" width="3" height="1"/><rect x="877" y="114" width="2" height="2"/>
<rect x="772" y="912" width="3" height="2"/><rect x="790" y="917" width="4" height="2"/><rect x="814" y="918" width="4" height="2"/><rect x="836" y="914" width="6" height="2"/><rect x="855" y="913" width="4" height="2"/><rect x="870" y="915" width="5" height="2"/><rect x="880" y="917" width="3" height="2"/><rect x="914" y="911" width="2" height="2"/><rect x="931" y="906" width="2" height="2"/><rect x="942" y="912" width="2" height="2"/><rect x="942" y="920" width="2" height="2"/><rect x="942" y="933" width="2" height="2"/>
<rect x="1108" y="986" width="60" height="1.500"/><rect x="1060" y="984" width="30" height="1.500" opacity=".7"/><rect x="1207" y="962" width="2" height="28"/>
</g>

</g>
<g stroke="#8d9bb3" stroke-width="1" shape-rendering="crispEdges">
<path d="M74.5,299.5 h28 M88.5,285.5 v28"/>
<path d="M84.5,593.5 h28 M98.5,579.5 v28"/>
<path d="M93.5,887.5 h28 M107.5,873.5 v28"/>
<path d="M368.5,289.5 h28 M382.5,275.5 v28"/>
<path d="M377.5,583.5 h28 M391.5,569.5 v28"/>
<path d="M386.5,877.5 h28 M400.5,863.5 v28"/>
<path d="M661.5,279.5 h28 M675.5,265.5 v28" opacity="0.28"/>
<path d="M670.5,573.5 h28 M684.5,559.5 v28" opacity="0.28"/>
<path d="M680.5,867.5 h28 M694.5,853.5 v28" opacity="0.28"/>
<path d="M954.5,270.5 h28 M968.5,256.5 v28" opacity="0.28"/>
<path d="M964.5,564.5 h28 M978.5,550.5 v28" opacity="0.28"/>
<path d="M974.5,858.5 h28 M988.5,844.5 v28" opacity="0.28"/>
<path d="M1248.5,260.5 h28 M1262.5,246.5 v28" opacity="0.28"/>
<path d="M1258.5,554.5 h28 M1272.5,540.5 v28" opacity="0.28"/>
<path d="M1267.5,848.5 h28 M1281.5,834.5 v28" opacity="0.28"/>
<path d="M1542.5,250.5 h28 M1556.5,236.5 v28"/>
<path d="M1551.5,544.5 h28 M1565.5,530.5 v28"/>
<path d="M1560.5,838.5 h28 M1574.5,824.5 v28"/>
<path d="M1838,240.5 h11 M1838,535.5 h11 M1838,829.5 h11"/>
</g>
<g font-family="Liberation Serif,serif" font-size="8.3" fill="#7f8797" opacity="0.7">
<text x="29" y="308">6043000.00N</text>
<text x="29" y="603">6042000.00N</text>
<text x="29" y="898">6041000.00N</text>
<text x="1781" y="248">6043000.00N</text>
<text x="1781" y="543">60</text>
<text x="1781" y="837">6041000.00N</text>
<text transform="translate(102,975) rotate(90)">344000.00E</text>
<text transform="translate(396,975) rotate(90)">345000.00E</text>
<text transform="translate(690,975) rotate(90)">346000.00E</text>
<text transform="translate(984,975) rotate(90)">347000.00E</text>
<text transform="translate(1278,975) rotate(90)">348000.00E</text>
<text transform="translate(1572,975) rotate(90)">349000.00E</text>
<text transform="translate(366,94) rotate(90)">345000.00E</text>
<text transform="translate(660,94) rotate(90)">346000.00E</text>
<text transform="translate(954,94) rotate(90)">347000.00E</text>
<text transform="translate(1248,94) rotate(90)">348000.00E</text>
<text transform="translate(1542,94) rotate(90)">349000.00E</text>
</g>
<!-- range circles -->
<g fill="none">
<circle cx="807.6" cy="525.6" r="441.9" stroke="#00000c" stroke-width="1.75"/>
<circle cx="807.8" cy="525.3" r="294.6" stroke="#00000c" stroke-width="1.75"/>
<circle cx="808" cy="524.5" r="384.5" stroke="#d05a98" stroke-width="1.5" stroke-opacity="0.78"/>
<line x1="808" y1="524.5" x2="918" y2="893" stroke="#d05a98" stroke-width="1.5" stroke-opacity="0.7"/>
</g>
<g fill="none" stroke="#e8386e" stroke-width="1.2">
<circle cx="808" cy="524.5" r="3.5"/><path d="M803,524.5 h10 M808,519.5 v10" stroke="#30204a"/>
<circle cx="918" cy="893" r="4"/><path d="M912,893 h12 M918,887 v12"/>
</g>
<g font-family="Liberation Sans,sans-serif">
<text x="812.4" y="523.4" font-size="19" fill="#00000c" textLength="136.7" lengthAdjust="spacingAndGlyphs">BETTY MARIEL</text>
<text x="822" y="818.2" font-size="18.8" fill="#00000c" textLength="57.5" lengthAdjust="spacingAndGlyphs">1000.0</text>
<text x="827" y="965.4" font-size="18.8" fill="#00000c" textLength="57.3" lengthAdjust="spacingAndGlyphs">1500.0</text>
<text x="692.4" y="518" font-size="19" fill="#dcfeff" textLength="106.5" lengthAdjust="spacingAndGlyphs">z20200527a</text>
<text x="921.9" y="890.5" font-size="18.3" fill="#dcfeff" textLength="90.4" lengthAdjust="spacingAndGlyphs">BettyMariel</text>
<text x="1173.2" y="975.6" font-size="18.5" fill="#dcfeff" textLength="50.3" lengthAdjust="spacingAndGlyphs">Skalar</text>
<text x="171.9" y="432.8" font-size="18.5" fill="#c2f3fc" textLength="72.2" lengthAdjust="spacingAndGlyphs">Redlowo</text>
<text x="305" y="702.6" font-size="19" fill="#c2f3fc" textLength="105.4" lengthAdjust="spacingAndGlyphs">wr20121023</text>
<text x="1611.9" y="913.8" font-size="18.5" fill="#c2f3fc" textLength="51.6" lengthAdjust="spacingAndGlyphs">porcel</text>
<text x="1727.3" y="980.6" font-size="18.5" fill="#c2f3fc" textLength="70.2" lengthAdjust="spacingAndGlyphs">Gondola</text>
</g>
<g fill="#f4ffff">
<path d="M689.5,517 l2.6,2.600 l-2.600,2.600 l-2.600,-2.600z"/>
<path d="M1169.800,973.400 l2.500,2.500 l-2.500,2.500 l-2.500,-2.500z"/>
<path d="M302,702.200 l2.200,2.200 l-2.200,2.200 l-2.200,-2.200z" fill="#d4f8ff"/>
<path d="M1608.800,913.400 l2.200,2.200 l-2.200,2.200 l-2.200,-2.200z" fill="#d4f8ff"/>
<path d="M1723.600,980.300 l2.200,2.200 l-2.200,2.200 l-2.200,-2.200z" fill="#d4f8ff"/>
</g>
<path d="M163,436 l7,-4 M164,431 l3,6 M161,434 h4" stroke="#555" stroke-width="0.9" fill="none"/>
<text transform="translate(256,1015.500) rotate(-90)" font-family="Liberation Sans,sans-serif" font-size="19" fill="#0a3f9c">polBetty</text>
<rect x="0" y="80" width="2" height="941" fill="#7f858d"/>
<!-- legend -->
<rect x="1788" y="349" width="50" height="401" fill="url(#legend)"/>
<g font-family="Liberation Sans,sans-serif" font-size="12" text-anchor="middle">
<text x="1813" y="363" fill="#000">-2.00</text>
<text x="1813" y="427" fill="#d8d0c8">-5.60</text>
<text x="1813" y="507" fill="#000">-9.20</text>
<text x="1813" y="587" fill="#000">-12.80</text>
<text x="1813" y="667" fill="#d0d8e8">-16.40</text>
<text x="1813" y="746" fill="#fff">-20.00</text>
</g>

</g>
</svg>

<!-- Range tool report window -->
<div id="rtwin">
<div id="rttitle">
<svg class="abs" style="left:9px;top:6px" width="16" height="16" viewBox="0 0 16 16"><path d="M3.500,5 L9.500,1.500 L13.500,8.500 L6,11.500Z" fill="#f6ee9c" opacity=".85"/><path d="M1.800,1.600 L8,14" stroke="#6e78a8" stroke-width="2.200" stroke-linecap="round"/><path d="M1.800,1.600 L14.200,9" stroke="#8a8aa4" stroke-width="2" stroke-linecap="round"/><path d="M1.500,1.300 L4.500,4.600" stroke="#3a64c0" stroke-width="2.600" stroke-linecap="round"/></svg>
<span>Range Tool Report</span>
<svg class="abs" style="left:170px;top:0" width="122" height="30" viewBox="0 0 122 30" fill="none"><path d="M4.5,14.5 h10" stroke="#888"/><rect x="49.5" y="9.500" width="9" height="9" stroke="#d8d8d8"/><path d="M96,9 l10,10 M106,9 l-10,10" stroke="#888" stroke-width="1.1"/></svg>
</div>
<div id="rtgrid">
<div class="c h" style="left:0;top:0px;width:90px"></div>
<div class="c h" style="left:90px;top:0px;width:91px">Latitude</div>
<div class="c h" style="left:181px;top:0px;width:92px">Longitude</div>
<div class="c h" style="left:0;top:18px;width:90px">Start point</div>
<div class="c v" style="left:90px;top:18px;width:91px">&nbsp; 54.503696368</div>
<div class="c v" style="left:181px;top:18px;width:92px">&nbsp; 18.628106668</div>
<div class="c h" style="left:0;top:36px;width:90px">End point</div>
<div class="c v" style="left:90px;top:36px;width:91px">&nbsp; 54.492467232</div>
<div class="c v" style="left:181px;top:36px;width:92px">&nbsp; 18.633939759</div>
<div class="c h" style="left:0;top:54px;width:90px"></div>
<div class="c h" style="left:90px;top:54px;width:91px">Easting</div>
<div class="c h" style="left:181px;top:54px;width:92px">Northing</div>
<div class="c h" style="left:0;top:72px;width:90px">Start point</div>
<div class="c v" style="left:90px;top:72px;width:91px">346420.68</div>
<div class="c v" style="left:181px;top:72px;width:92px">6042154.24</div>
<div class="c h" style="left:0;top:90px;width:90px">End point</div>
<div class="c v" style="left:90px;top:90px;width:91px">346756.29</div>
<div class="c v" style="left:181px;top:90px;width:92px">6040892.41</div>
<div class="c h" style="left:0;top:108px;width:90px"></div>
<div class="c h" style="left:90px;top:108px;width:91px">Ellipsoidal</div>
<div class="c h" style="left:181px;top:108px;width:92px">Grid</div>
<div class="c h" style="left:0;top:126px;width:90px">Distance</div>
<div class="c v" style="left:90px;top:126px;width:91px">1305.847</div>
<div class="c v" style="left:181px;top:126px;width:92px">1305.702</div>
<div class="c h" style="left:0;top:144px;width:90px">Azimuth</div>
<div class="c v" style="left:90px;top:144px;width:91px">163.174855</div>
<div class="c v" style="left:181px;top:144px;width:92px">165.106157</div>
</div>
<svg class="abs" style="left:281px;top:202px" width="10" height="10"><g fill="#b8b8b8"><rect x="7" y="1" width="2" height="2"/><rect x="4" y="4" width="2" height="2"/><rect x="7" y="4" width="2" height="2"/><rect x="1" y="7" width="2" height="2"/><rect x="4" y="7" width="2" height="2"/><rect x="7" y="7" width="2" height="2"/></g></svg>
</div>
<!-- right pane -->
<div id="rightpane"></div>
<div class="abs" style="left:1854px;top:82px;width:26px;height:4px;background:repeating-linear-gradient(90deg,#9a9a9a 0 1px,#fff 1px 2px)"></div>
<div class="abs" style="left:1851px;top:90px;width:31px;height:201px;background:#f0f0f0"></div>
<div class="abs" style="left:1853px;top:186px;width:27px;height:1px;background:#a0a0a0"></div>
<div class="abs" style="left:1853px;top:256px;width:27px;height:1px;background:#a0a0a0"></div>
<div class="abs" style="left:1851px;top:191px;width:31px;height:30px;background:#cce4f7;border:1px solid #84bdea"></div>
<div class="abs" style="left:1850px;top:293px;width:36px;height:1px;background:#a0a0a0"></div>
<svg class="abs" style="left:0;top:0" width="1920" height="300" viewBox="0 0 1920 300"><path d="M1857.6,96.6 q8.6,-3.4 17,0 l-1,14.8 q-7.4,3.6 -15,0z" fill="#9a9a9a" stroke="#707070" stroke-width=".8"/><ellipse cx="1866.1" cy="96.8" rx="8.4" ry="2.4" fill="#d4d4d4" stroke="#8a8a8a" stroke-width=".7"/><text x="1866.2" y="110.6" font-size="14" text-anchor="middle" fill="#181818" font-family="Liberation Serif,serif">Σ</text><rect x="1855.6" y="125.6" width="20.6" height="20.6" fill="#f4f6f8" stroke="#9aa4b0" stroke-width=".8"/><path d="M1859.8,126 v20 M1864,126 v20 M1868.2,126 v20 M1872.4,126 v20 M1856,130 h20 M1856,134.2 h20 M1856,138.4 h20 M1856,142.6 h20" stroke="#b8c0cc" stroke-width=".6"/><rect x="1857" y="140" width="2.6" height="6" fill="#2a8ae0"/><rect x="1859.6" y="136" width="2.6" height="10" fill="#28a830"/><rect x="1862.6" y="131" width="2.8" height="15" fill="#2a8ae0"/><rect x="1865.4" y="128.6" width="2.8" height="17.4" fill="#28a830"/><rect x="1868.6" y="133" width="2.8" height="13" fill="#2a8ae0"/><rect x="1871.4" y="138" width="2.8" height="8" fill="#28a830"/><rect x="1855.6" y="156.4" width="20.6" height="20.6" fill="#f4f6f8" stroke="#9aa4b0" stroke-width=".8"/><path d="M1859.8,157 v20 M1864,157 v20 M1868.2,157 v20 M1872.4,157 v20 M1856,161 h20 M1856,165.2 h20 M1856,169.4 h20 M1856,173.6 h20" stroke="#a8b0bc" stroke-width=".7"/><path d="M1856,172 l4,-4 l3,2 l5,-6 l3,3 l5,-5 V177 H1856Z" fill="#28b030"/><path d="M1856,175 l5,-3 l4,1 l5,-5 l3,2 l3,-3 V177 H1856Z" fill="#2a78d8"/><path d="M1858.4,203.4 L1870,199 L1875.6,210.4 L1862,214.6Z" fill="#f4ecb0" stroke="#d8cc88" stroke-width=".6"/><path d="M1857.6,196.6 L1865.2,214 M1857.6,196.6 L1876.4,208.4" stroke="#787898" stroke-width="2.4" stroke-linecap="round"/><path d="M1857.6,196.6 L1865.2,214 M1857.6,196.6 L1876.4,208.4" stroke="#b4b4cc" stroke-width="1" stroke-linecap="round"/><circle cx="1858.4" cy="197.4" r="2" fill="#3a68c8"/><path d="M1858.2,244.2 C1860,236 1868,242 1872.8,229.6" stroke="#d8a828" stroke-width="1.6" fill="none"/><circle cx="1858.4" cy="244" r="3.3" fill="#3a90e8" stroke="#2a70c8" stroke-width=".6"/><circle cx="1873" cy="229.4" r="3.3" fill="#3a90e8" stroke="#2a70c8" stroke-width=".6"/><circle cx="1858.8" cy="229.8" r="3.4" fill="#f8a020" stroke="#f8d040" stroke-width=".9" stroke-dasharray="1.2 1"/><path d="M1859,283.6 Q1860.4,272 1869.4,270.6 Q1873,275 1870.6,283.6Z" fill="#f0a8b4" stroke="#381820" stroke-width="1"/><path d="M1857,284 h16" stroke="#181010" stroke-width="1.3"/><circle cx="1866" cy="284.4" r="1.3" fill="#fff" stroke="#181010" stroke-width=".6"/><path d="M1866.6,283 L1875.6,274.4" stroke="#208828" stroke-width="3.4"/><path d="M1866.6,283 L1875.6,274.4" stroke="#58d048" stroke-width="1.6"/><path d="M1874.4,273.2 l2.4,2.4" stroke="#d83030" stroke-width="2.8"/></svg>
<div class="abs" style="left:1884px;top:343px;width:36px;height:1px;background:#a0a0a0"></div>
<div class="abs" style="left:1889px;top:346px;width:26px;height:4px;background:repeating-linear-gradient(90deg,#9a9a9a 0 1px,#fff 1px 2px)"></div>
<div class="abs" style="left:1887px;top:353px;width:33px;height:288px;background:#f0f0f0"></div>
<div class="abs" style="left:1887px;top:354px;width:31px;height:30px;background:#cce4f7;border:1px solid #84bdea"></div>
<div class="key" style="top:358.5px">A</div><div class="key" style="top:389.5px">B</div><div class="key" style="top:420.5px">C</div><div class="key" style="top:451.5px">D</div><div class="key" style="top:482.5px">E</div><div class="key" style="top:513.5px">F</div><div class="key" style="top:544.5px">G</div><div class="key" style="top:575.5px">Z</div>
<div class="abs" style="left:1889px;top:605px;width:27px;height:1px;background:#a0a0a0"></div>
<div class="key" style="top:613.5px;line-height:24px;font-size:15px;letter-spacing:0">...</div>
<div class="abs" style="left:1884px;top:642px;width:36px;height:1px;background:#a0a0a0"></div>
<div class="abs" style="left:1850px;top:1019px;width:70px;height:1px;background:#8e8e8e"></div>
<!-- status bar -->
<div id="statusbar">
<span style="left:2px;letter-spacing:-.46px">Level 5 : Bin size 6.4x6.4</span><i style="left:140px"></i>
<span style="left:145px;letter-spacing:-.37px">Mean: -12.21, SD (95%): 2.52, Count: 83848</span><i style="left:379px"></i>
<span style="left:384px;letter-spacing:-.66px">346756.29E, 6040892.41N</span><i style="left:538px"></i>
<span style="left:546px;letter-spacing:-.72px">54.492467232, &nbsp;&nbsp; 18.633939759</span><i style="left:708px"></i>
<span style="left:713px;letter-spacing:-.6px">Ready</span><i style="left:1196px"></i>
</div>
<div id="taskbar">
<svg class="abs" style="left:0;top:0" width="1920" height="40" viewBox="0 0 1920 40"><defs>
<linearGradient id="ffx" x1="0.2" y1="0" x2="0.7" y2="1"><stop offset="0" stop-color="#ffd040"/><stop offset=".45" stop-color="#ff7a20"/><stop offset="1" stop-color="#e8283c"/></linearGradient>
<radialGradient id="ffp" cx=".5" cy=".5" r=".5"><stop offset="0" stop-color="#8a3ad0"/><stop offset="1" stop-color="#5a2ab0"/></radialGradient>
<linearGradient id="org" x1="0" y1="0" x2="0" y2="1"><stop offset="0" stop-color="#f89018"/><stop offset="1" stop-color="#e85808"/></linearGradient>
<linearGradient id="rb2" x1="0" x2="1"><stop offset="0" stop-color="#e81818"/><stop offset=".2" stop-color="#f08818"/><stop offset=".4" stop-color="#e8e818"/><stop offset=".6" stop-color="#28d828"/><stop offset=".8" stop-color="#20b8f0"/><stop offset="1" stop-color="#1028d0"/></linearGradient>
<linearGradient id="bkt" x1="0" y1="0" x2="0" y2="1"><stop offset="0" stop-color="#4aa0f0"/><stop offset="1" stop-color="#1860c8"/></linearGradient>
<linearGradient id="mailg" x1="0" y1="0" x2="1" y2="1"><stop offset="0" stop-color="#2aa0f0"/><stop offset="1" stop-color="#1a80d8"/></linearGradient>
</defs><rect x="539" y="0" width="48" height="40" fill="#3c4650"/><rect x="200" y="37.7" width="40" height="2.3" fill="#76b9ed"/><rect x="396.5" y="37.7" width="39.5" height="2.3" fill="#76b9ed"/><rect x="445" y="37.7" width="40" height="2.3" fill="#76b9ed"/><rect x="494" y="37.7" width="40" height="2.3" fill="#76b9ed"/><rect x="539" y="37.7" width="48" height="2.3" fill="#76b9ed"/><rect x="592" y="37.7" width="40" height="2.3" fill="#76b9ed"/><g fill="#fff"><path d="M16,13.9 L22.6,13 V19.4 H16Z M23.5,12.9 L32.2,11.7 V19.4 H23.5Z M16,20.3 H22.6 V26.7 L16,25.8Z M23.5,20.3 H32.2 V28 L23.5,26.8Z"/></g><circle cx="74.4" cy="17.2" r="5.4" fill="none" stroke="#fff" stroke-width="1.4"/><path d="M70.4,21 L64.4,27.4" stroke="#fff" stroke-width="1.5"/><g fill="none" stroke="#fff" stroke-width="1.3"><rect x="113.6" y="15.6" width="8.6" height="7.8"/><path d="M112,12.6 h1.8 v1.6 M123.8,14.2 v-1.6 h-1.8 M112,26.6 h1.8 v-1.6 M123.8,25 v1.6 h-1.8 M112,13 h11.6 M112,26.4 h11.6" /><path d="M126.8,12.4 v2.4 M126.8,17 v9.6" stroke-width="1.6"/></g><path d="M161.8,21.6 C162.4,14 167.4,9.6 172.6,9.6 C178.6,9.6 181.4,14.4 181.3,19.8 H168.4 C168.6,23.6 171.4,25.8 174.8,25.8 C177,25.8 179,25.2 180.6,24.2 V28.8 C178.8,29.8 176.4,30.4 173.8,30.4 C167.4,30.4 163.8,26 163.9,20.4 C164,16.6 166.4,13.8 169,12.6 C166,13.4 163,16.4 161.8,21.6Z M168.6,16.6 H175.6 C175.6,14.6 174.6,13.2 172.4,13.2 C170.2,13.2 168.9,14.8 168.6,16.6Z" fill="#1e88e5" fill-rule="evenodd"/><path d="M208.8,12.2 q0,-1.2 1.2,-1.2 h6 l1.6,1.8 h11.8 q1.2,0 1.2,1.2 v13.2 q0,1.2 -1.2,1.2 h-19.4 q-1.2,0 -1.2,-1.2z" fill="#f8d878"/><path d="M208.8,14.6 h21.8 v12.6 q0,1.2 -1.2,1.2 h-19.4 q-1.2,0 -1.2,-1.2z" fill="#fbe39a"/><path d="M212.8,28.4 v-6.6 q0,-1 1,-1 h11.8 q1,0 1,1 v6.6 h-3.8 v-3.8 h-6.2 v3.8z" fill="#3a9ae0"/><path d="M216.6,24.6 h6.2 v3.8 h-6.2z" fill="#8cc8f4" opacity=".5"/><path d="M257.2,14.6 h22.6 v14.8 q0,1.6 -1.6,1.6 h-19.4 q-1.6,0 -1.6,-1.6z" fill="#fff"/><path d="M264.2,14.4 q0,-6 4.3,-6 q4.3,0 4.3,6" fill="none" stroke="#fff" stroke-width="1.4"/><rect x="263.2" y="17.4" width="4.8" height="4.8" fill="#f04828"/><rect x="269" y="17.4" width="4.8" height="4.8" fill="#80c030"/><rect x="263.2" y="23.2" width="4.8" height="4.8" fill="#28a0e8"/><rect x="269" y="23.2" width="4.8" height="4.8" fill="#f8b818"/><rect x="305.8" y="8" width="24.2" height="24" fill="#2aa2d4"/><path d="M316.2,11.6 L311.4,27.6 H316Z" fill="#14306c"/><path d="M316,11.6 h3.4 v12.6 h7 v3.4 h-10.4z" fill="#fff"/><path d="M355,15.6 L367,8.6 L379,15.6 V30.8 H355Z" fill="#1565c0"/><path d="M355,16.4 h24 v14.4 h-24z" fill="url(#mailg)"/><path d="M357,16.4 h20 l-10,6.2z" fill="#fff"/><path d="M355,30.8 L366,23 h2 L379,30.8" fill="#1a78d0" opacity=".6"/><circle cx="416" cy="20.6" r="11" fill="url(#ffx)"/><path d="M417.6,7.4 q5.4,3.4 5,9.6 q3.6,-1.6 3.2,-6 q3.6,6.8 1,12.4 q-5,-6 -12,-9.6 q2.6,-2.4 2.8,-6.4z" fill="#ffc030"/><circle cx="415.4" cy="21.2" r="5.2" fill="url(#ffp)"/><path d="M406,13 q2,3.6 6,4.2 q3.4,.4 5.6,2.400 q-3.400,-1 -5.600,.6 q-4.400,0 -6,-7.200z" fill="#ff8a20"/><path d="M453.4,9.6 q0,-1.400 1.400,-1.400 h19.200 l2.600,2.600 v19.600 q0,1.400 -1.400,1.400 h-20.400 q-1.400,0 -1.400,-1.400z" fill="#2a48c8" stroke="#8898d8" stroke-width=".6"/><rect x="459.600" y="8.600" width="10.400" height="6.600" fill="#c8ccd8"/><rect x="465.600" y="9.400" width="2.800" height="5" fill="#4860b8"/><rect x="456.200" y="18.200" width="17.600" height="12.600" fill="#f8e8e8"/><path d="M457,21 h16 M457,23.800 h16 M457,26.600 h16" stroke="#e87878" stroke-width="1.100"/><rect x="466" y="26" width="6" height="3.600" fill="#282828"/><rect x="502" y="8" width="24" height="24" fill="url(#org)"/><rect x="507" y="13" width="14" height="14" rx="2.400" fill="none" stroke="#fff" stroke-width="1.500"/><rect x="509.600" y="15.600" width="8.800" height="4.600" fill="#fff" opacity=".92"/><path d="M509.800,23.600 h2.400 M513.400,23.600 h2.400" stroke="#fff" stroke-width="1.200"/><rect x="552" y="9" width="22" height="22" rx="2.400" fill="url(#rb2)"/><path d="M566.600,31 L574,12 V28.600 q0,2.400 -2.400,2.400z" fill="#1020c0"/><path d="M556.400,9 v22 M560.800,9 v22 M565.200,9 v22 M569.600,9 v22 M552,14.500 h22 M552,20 h22 M552,25.500 h22" stroke="#202020" stroke-width=".7" opacity=".5"/><path d="M601.400,16.400 q10.600,4.400 21.200,0 l-.8,10.800 q-9.800,6 -19.600,0z" fill="url(#bkt)"/><ellipse cx="612" cy="16.400" rx="10.600" ry="3.400" fill="#3a80d8"/><path d="M604,11.600 l3,-1.800 l2.600,1.400 l2.600,-2 l3,1.600 l2.600,-1.200 l2.200,2.600 l-1,4.400 q-7,2.400 -14.400,0z" fill="#eef2f8" stroke="#b8c4d8" stroke-width=".5"/><path d="M607,12 l1,4 M612.200,10.800 l.4,5.600 M617,11.800 l-.6,4.600" stroke="#a0b0cc" stroke-width=".8"/><g fill="none" stroke="#fff" stroke-width="1.200"><circle cx="1684.400" cy="14.600" r="2.700"/><path d="M1679.600,21.400 q4.800,-6.400 9.600,0"/><circle cx="1677.600" cy="21.800" r="2.700"/><path d="M1673,29 q4.600,-6.600 9.200,0"/></g><path d="M1711.200,23 L1717,17.200 L1722.800,23" fill="none" stroke="#fff" stroke-width="1.300"/><g fill="none" stroke="#fff" stroke-width="1.200"><rect x="1737.400" y="16.800" width="10.200" height="6.400"/><path d="M1748,18.600 v2.800"/><rect x="1738.600" y="18" width="7.800" height="4" fill="#fff" stroke="none"/><path d="M1733.400,16 v2.400 M1736.200,16 v2.400 M1732.600,18.400 h4.400 v1.600 q-2.200,2.400 -4.400,0z M1734.800,21.600 v2 h2.200" /></g><g fill="none" stroke="#fff" stroke-width="1.200"><path d="M1760.200,26.600 q.6,-9.800 11,-11" opacity=".95"/><path d="M1763.200,26.600 q.6,-7 8,-8" opacity=".95"/><path d="M1766.200,26.600 q.4,-4.200 5,-5" opacity=".95"/></g><circle cx="1770.200" cy="25.600" r="1.500" fill="#fff"/><g fill="none" stroke="#fff" stroke-width="1.200"><path d="M1781.600,18.600 h2.200 l3,-3 v11.200 l-3,-3 h-2.200z"/><path d="M1790,18.800 l4.400,4.400 M1794.400,18.800 l-4.400,4.400" stroke-width="1.100"/></g><path d="M1879.600,13.400 h15 v11.400 h-5.400 l-2.100,2.100 l-2.100,-2.100 h-5.400z" fill="none" stroke="#fff" stroke-width="1.200"/></svg>
<div class="abs" style="left:1829px;top:4px;width:0;white-space:nowrap;color:#fff;font-size:11.5px;text-align:center"><div style="position:absolute;left:-22px;width:52px;top:0;text-align:center;letter-spacing:-.5px">19:32</div><div style="position:absolute;left:-32px;width:72px;top:18px;text-align:center;letter-spacing:-.33px">04.06.2020</div></div>
<div class="abs" style="left:1915px;top:2px;width:1px;height:36px;background:#5a5a6e"></div>
</div>

</body></html>
